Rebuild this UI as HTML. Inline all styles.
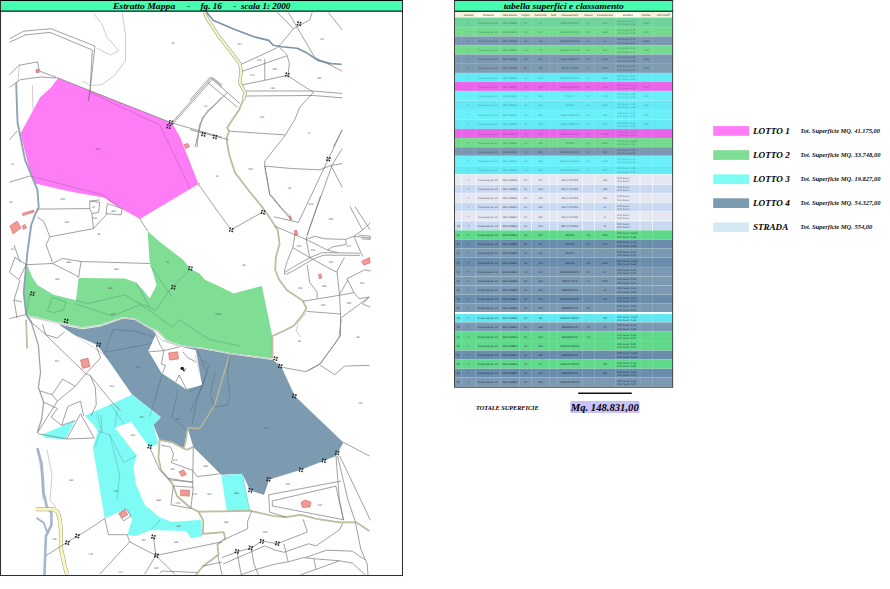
<!DOCTYPE html>
<html lang="it"><head><meta charset="utf-8"><title>Estratto Mappa fg. 16</title>
<style>
html,body{margin:0;padding:0;background:#fff;}
body{width:890px;height:589px;overflow:hidden;position:relative;font-family:"Liberation Serif",serif;}
svg{position:absolute;left:0;top:0;display:block;}
.bi{font-family:"Liberation Serif",serif;font-weight:bold;font-style:italic;}
.tt{font-family:"Liberation Sans",sans-serif;text-rendering:geometricPrecision;}
</style></head><body>
<svg width="890" height="589" viewBox="0 0 890 589">
<rect x="0" y="0" width="890" height="589" fill="#ffffff"/>

<g id="map">
<polygon points="58.0,78.0 172.0,123.0 180.0,137.0 198.5,184.0 139.8,219.0 110.7,202.5 104.4,197.8 70.0,191.5 35.2,183.6 30.0,172.0 20.5,133.5 40.0,97.5 51.0,87.5" fill="#fe7cf6" />
<polygon points="27.0,265.0 32.4,277.4 37.4,284.9 53.6,294.8 76.0,300.3 78.6,277.9 100.0,278.3 124.7,278.6 136.0,282.4 143.0,290.0 149.7,298.6 156.6,284.9 149.7,262.4 147.7,231.2 160.0,242.0 183.3,260.0 190.0,268.6 199.5,273.6 205.0,279.8 222.0,287.5 233.6,293.5 261.8,286.0 264.8,300.0 272.3,336.2 272.8,358.6 230.0,352.9 215.0,350.0 199.6,347.2 190.0,347.0 179.2,344.4 167.3,340.3 157.8,330.7 149.7,327.3 134.7,318.5 122.2,317.3 99.8,324.8 82.3,327.3 52.4,321.0 26.2,314.8 23.7,292.3" fill="#7fdd94" />
<polygon points="58.6,324.2 72.0,327.3 82.3,329.2 99.8,326.8 112.0,322.4 122.2,318.7 134.7,319.8 152.2,329.8 162.0,340.0 179.6,346.2 199.6,348.4 215.0,351.2 230.0,354.0 272.8,360.0 281.0,366.0 294.8,396.0 343.4,442.4 336.0,456.0 323.4,461.0 301.0,469.8 268.6,479.8 263.6,494.8 249.9,490.3 242.4,473.8 221.2,474.8 193.3,446.9 187.6,428.0 183.7,448.5 172.5,442.4 159.6,440.1 153.4,424.7 160.9,417.2 132.2,394.8 109.8,362.4 97.3,345.0 74.8,335.0" fill="#7c9ab0" />
<polygon points="156.0,333.7 148.4,351.0 161.5,373.0 186.0,389.3 202.3,384.9 195.8,350.0 179.6,346.5 162.0,340.5" fill="#ffffff" />
<polygon points="41.2,434.9 74.8,420.5 65.4,439.4 46.0,438.0" fill="#7ffbf6" />
<polygon points="84.8,415.5 132.2,394.8 160.9,417.5 153.4,425.0 158.4,443.6 149.7,447.4 131.0,422.0 114.7,427.4 136.7,455.4 133.4,467.3 136.0,484.8 144.7,504.8 159.6,517.2 172.0,522.0 200.8,519.7 202.5,536.0 191.6,538.4 185.8,531.0 151.0,530.0 136.0,536.0 127.2,534.7 132.2,519.7 126.0,508.5 104.8,518.5 92.8,447.4 97.8,431.2 93.5,425.0" fill="#7ffbf6" />
<polygon points="221.2,475.3 242.4,473.8 249.9,511.0 226.9,511.5" fill="#7ffbf6" />
<polyline points="27.0,316.0 52.4,321.8 66.0,324.8 82.3,328.2 99.8,325.8 112.0,321.4 122.2,317.9 134.7,319.1 149.7,328.2 157.8,331.8 167.3,341.2 179.2,345.4 199.6,348.0 215.0,350.7 230.0,353.5 272.8,359.4" fill="none" stroke="#cdd2cc" stroke-width="1.3" stroke-linejoin="round"/>
<polyline points="204.2,12.0 208.0,20.2 218.2,35.5 231.0,52.0 239.9,63.5 241.3,72.0 239.6,82.5 245.2,93.0 243.3,100.0" fill="none" stroke="#8f8f80" stroke-width="3.3" stroke-linejoin="round"/>
<polyline points="204.2,12.0 208.0,20.2 218.2,35.5 231.0,52.0 239.9,63.5 241.3,72.0 239.6,82.5 245.2,93.0 243.3,100.0" fill="none" stroke="#f8f6c6" stroke-width="2.3" stroke-linejoin="round"/>
<polyline points="243.3,100.0 238.8,110.3 227.1,127.8 229.1,131.0 226.5,138.8 229.1,154.3 234.9,172.4 251.0,193.5 262.0,206.7 269.5,217.4 277.7,230.0 279.6,243.8 275.8,257.6 275.2,270.0 279.3,280.0 287.0,290.2 302.3,300.4 306.5,308.0 303.1,314.0 293.8,325.8 283.6,330.9 272.5,336.0 272.5,358.0" fill="none" stroke="#b4b496" stroke-width="1.7" stroke-linejoin="round"/>
<polyline points="243.3,100.0 238.8,110.3 227.1,127.8 229.1,131.0 226.5,138.8 229.1,154.3 234.9,172.4 251.0,193.5 262.0,206.7 269.5,217.4 277.7,230.0 279.6,243.8 275.8,257.6 275.2,270.0 279.3,280.0 287.0,290.2 302.3,300.4 306.5,308.0 303.1,314.0 293.8,325.8 283.6,330.9 272.5,336.0 272.5,358.0" fill="none" stroke="#cfcfb2" stroke-width="0.5" stroke-linejoin="round"/>
<polyline points="229.8,353.7 214.8,404.8 199.8,428.5 187.6,428.0 186.0,441.2 183.7,448.5" fill="none" stroke="#b4b496" stroke-width="1.2999999999999998" stroke-linejoin="round"/>
<polyline points="229.8,353.7 214.8,404.8 199.8,428.5 187.6,428.0 186.0,441.2 183.7,448.5" fill="none" stroke="#cfcfb2" stroke-width="0.3" stroke-linejoin="round"/>
<polyline points="192.7,446.9 187.6,449.7 183.7,448.5 172.5,442.4 159.6,440.1 158.4,458.1 161.2,470.4 172.5,483.9 177.0,496.0 190.0,507.5" fill="none" stroke="#b4b496" stroke-width="1.7" stroke-linejoin="round"/>
<polyline points="192.7,446.9 187.6,449.7 183.7,448.5 172.5,442.4 159.6,440.1 158.4,458.1 161.2,470.4 172.5,483.9 177.0,496.0 190.0,507.5" fill="none" stroke="#cfcfb2" stroke-width="0.5" stroke-linejoin="round"/>
<polyline points="190.0,507.5 198.5,511.7 222.0,511.4 249.8,510.7 273.3,516.0 286.1,517.1 301.0,514.9 318.1,519.2 339.4,522.4 356.5,522.4 369.3,531.0" fill="none" stroke="#b4b496" stroke-width="1.7" stroke-linejoin="round"/>
<polyline points="190.0,507.5 198.5,511.7 222.0,511.4 249.8,510.7 273.3,516.0 286.1,517.1 301.0,514.9 318.1,519.2 339.4,522.4 356.5,522.4 369.3,531.0" fill="none" stroke="#cfcfb2" stroke-width="0.5" stroke-linejoin="round"/>
<polyline points="198.5,512.0 203.3,520.4 203.0,533.8 223.7,532.2 225.3,538.5 217.4,544.5 218.6,554.5 202.2,567.0 196.0,574.7" fill="none" stroke="#b4b496" stroke-width="1.7" stroke-linejoin="round"/>
<polyline points="198.5,512.0 203.3,520.4 203.0,533.8 223.7,532.2 225.3,538.5 217.4,544.5 218.6,554.5 202.2,567.0 196.0,574.7" fill="none" stroke="#cfcfb2" stroke-width="0.5" stroke-linejoin="round"/>
<polyline points="26.2,319.8 27.0,348.5" fill="none" stroke="#b4b496" stroke-width="1.7" stroke-linejoin="round"/>
<polyline points="26.2,319.8 27.0,348.5" fill="none" stroke="#cfcfb2" stroke-width="0.5" stroke-linejoin="round"/>
<polyline points="206.8,12.5 213.1,20.2 233.5,29.1 253.9,36.8 268.8,40.4 273.2,45.2 281.7,46.8 297.2,48.3 307.5,53.3 317.9,60.4 330.8,63.6 341.1,64.2" fill="none" stroke="#7b92a9" stroke-width="1.6" stroke-linejoin="round" stroke-linecap="round"/>
<polyline points="16.2,83.7 17.5,122.4 25.0,159.8 37.4,189.7 38.7,207.0 35.0,214.9 31.2,225.0 27.4,252.4 23.7,292.3 26.2,314.8 31.2,322.0" fill="none" stroke="#8fa3b5" stroke-width="1.9" stroke-linejoin="round" stroke-linecap="round"/>
<polyline points="37.6,449.0 41.5,463.0 43.0,481.0 43.5,492.0 46.8,506.8 51.4,512.9 51.4,525.1 46.0,535.8 45.3,551.0 44.5,574.0" fill="none" stroke="#a3b7cd" stroke-width="2.6" stroke-linejoin="round" stroke-linecap="round"/>
<polyline points="36.9,518.2 43.7,522.8 46.8,531.2" fill="none" stroke="#9db1c7" stroke-width="1.8" stroke-linejoin="round" stroke-linecap="round"/>
<polyline points="31.2,322.0 33.2,328.5 38.4,345.4 39.5,360.1 40.5,372.7 38.4,387.5 43.7,402.2 41.6,419.0 37.4,432.7" fill="none" stroke="#9aa6b6" stroke-width="1.3" stroke-linejoin="round" stroke-linecap="round"/>
<polyline points="36.1,509.2 54.0,509.2 58.0,512.5 59.8,520.0 60.9,530.0 60.9,548.0 64.7,566.0 67.0,574.2" fill="none" stroke="#9a9a80" stroke-width="4.0" stroke-linejoin="round"/>
<polyline points="36.1,509.2 54.0,509.2 58.0,512.5 59.8,520.0 60.9,530.0 60.9,548.0 64.7,566.0 67.0,574.2" fill="none" stroke="#fbf7c0" stroke-width="3.1" stroke-linejoin="round"/>
<polyline points="9.5,38.7 23.7,31.2 51.1,28.7 94.8,46.1 94.8,47.4 89.8,92.3 88.5,101.0" fill="none" stroke="#787878" stroke-width="0.7" />
<polyline points="9.5,42.4 25.0,35.0 50.0,32.4 92.3,50.0 90.0,92.0" fill="none" stroke="#787878" stroke-width="0.7" />
<polyline points="9.5,74.8 18.7,65.4 37.4,61.9 39.4,71.1 58.0,78.0 172.0,123.0 222.0,137.3" fill="none" stroke="#787878" stroke-width="0.7" />
<polyline points="9.5,87.3 20.0,79.8 40.0,77.0 56.0,78.0" fill="none" stroke="#787878" stroke-width="0.7" />
<polyline points="172.0,122.6 212.0,77.3 222.0,84.8" fill="none" stroke="#787878" stroke-width="0.7" />
<polyline points="173.0,123.6 213.0,78.6 222.0,86.8" fill="none" stroke="#787878" stroke-width="0.7" />
<polyline points="208.3,109.8 199.5,124.7 197.0,147.3" fill="none" stroke="#787878" stroke-width="0.7" />
<polyline points="222.0,97.4 212.0,107.4 208.3,109.8" fill="none" stroke="#787878" stroke-width="0.7" />
<polyline points="9.5,139.8 17.0,131.0" fill="none" stroke="#787878" stroke-width="0.7" />
<polyline points="9.5,182.2 30.0,176.0" fill="none" stroke="#787878" stroke-width="0.7" />
<polyline points="198.3,184.0 214.5,207.0 231.2,229.7 262.3,212.2" fill="none" stroke="#787878" stroke-width="0.7" />
<polyline points="200.0,183.6 198.3,184.0" fill="none" stroke="#787878" stroke-width="0.7" />
<polyline points="37.4,209.1 89.8,208.6 89.8,201.1 99.8,199.9" fill="none" stroke="#787878" stroke-width="0.7" />
<polyline points="89.8,201.1 99.8,202.4 98.5,212.4 91.8,213.6 89.8,208.6" fill="none" stroke="#787878" stroke-width="0.7" />
<polyline points="91.8,213.6 93.5,228.6 49.9,236.8" fill="none" stroke="#787878" stroke-width="0.7" />
<polyline points="107.3,203.6 122.2,208.6 121.0,214.9 106.0,213.6 107.3,203.6" fill="none" stroke="#787878" stroke-width="0.7" />
<polyline points="93.5,228.6 107.3,213.6" fill="none" stroke="#787878" stroke-width="0.7" />
<polyline points="37.4,217.3 43.7,221.1 49.9,236.8 46.1,244.8 52.4,262.2" fill="none" stroke="#787878" stroke-width="0.7" />
<polyline points="26.2,264.7 52.4,263.5 62.4,258.5 81.1,261.5 149.7,263.5" fill="none" stroke="#787878" stroke-width="0.7" />
<polyline points="81.1,261.5 78.6,277.2" fill="none" stroke="#787878" stroke-width="0.7" />
<polyline points="52.4,263.5 74.8,274.7 78.6,277.2" fill="none" stroke="#787878" stroke-width="0.7" />
<polyline points="9.5,272.2 18.7,279.7 26.2,264.7 15.0,257.3 9.5,272.2" fill="none" stroke="#787878" stroke-width="0.7" />
<polyline points="139.7,218.6 147.7,231.2" fill="none" stroke="#787878" stroke-width="0.7" />
<polyline points="9.5,318.5 25.0,314.8" fill="none" stroke="#787878" stroke-width="0.7" />
<polyline points="14.0,245.0 20.0,262.0" fill="none" stroke="#787878" stroke-width="0.7" />
<polyline points="20.0,280.0 14.0,300.0 22.0,302.0" fill="none" stroke="#787878" stroke-width="0.7" />
<polyline points="14.0,300.0 17.0,318.0" fill="none" stroke="#787878" stroke-width="0.7" />
<polyline points="104.8,518.5 86.0,531.0 67.3,542.2 46.1,555.5" fill="none" stroke="#787878" stroke-width="0.7" />
<polyline points="104.8,518.5 108.5,534.7 127.2,534.7 129.7,541.8 155.9,555.5 222.0,541.8" fill="none" stroke="#787878" stroke-width="0.7" />
<polyline points="149.7,447.4 159.6,469.8 169.6,479.8 193.3,482.3" fill="none" stroke="#787878" stroke-width="0.7" />
<polyline points="173.4,486.0 193.3,487.3 190.8,508.5 170.9,504.8 173.4,486.0" fill="none" stroke="#787878" stroke-width="0.7" />
<polyline points="118.5,513.5 126.0,508.5 131.0,516.0 123.5,521.0 118.5,513.5" fill="none" stroke="#787878" stroke-width="0.7" />
<polyline points="129.7,541.8 99.8,574.0" fill="none" stroke="#787878" stroke-width="0.7" />
<polyline points="155.9,555.5 144.7,574.0" fill="none" stroke="#787878" stroke-width="0.7" />
<polyline points="155.9,555.5 174.6,574.0" fill="none" stroke="#787878" stroke-width="0.7" />
<polyline points="153.4,536.8 155.9,555.5" fill="none" stroke="#787878" stroke-width="0.7" />
<polyline points="159.6,573.0 162.0,571.0 197.0,572.5" fill="none" stroke="#787878" stroke-width="0.7" />
<polyline points="277.3,12.5 293.5,28.7 281.7,42.9 276.5,48.1 241.6,64.2" fill="none" stroke="#787878" stroke-width="0.7" />
<polyline points="288.5,12.5 314.7,57.4 342.2,71.1" fill="none" stroke="#787878" stroke-width="0.7" />
<polyline points="312.2,12.5 309.7,20.0 293.5,28.7" fill="none" stroke="#787878" stroke-width="0.7" />
<polyline points="328.4,12.5 342.2,29.9" fill="none" stroke="#787878" stroke-width="0.7" />
<polyline points="242.3,71.3 286.8,55.8" fill="none" stroke="#787878" stroke-width="0.7" />
<polyline points="279.1,46.8 286.8,54.5 289.4,63.6 288.1,73.9" fill="none" stroke="#787878" stroke-width="0.7" />
<polyline points="264.8,58.8 264.8,80.3" fill="none" stroke="#787878" stroke-width="0.7" />
<polyline points="242.4,84.8 264.8,80.3 287.3,75.3 299.7,83.6 313.5,92.3" fill="none" stroke="#787878" stroke-width="0.7" />
<polyline points="246.1,91.0 313.5,91.0 342.2,93.5" fill="none" stroke="#787878" stroke-width="0.7" />
<polyline points="246.1,96.0 313.5,95.5 342.2,97.8" fill="none" stroke="#787878" stroke-width="0.7" />
<polyline points="313.5,92.3 299.7,107.3 294.8,119.7 284.8,135.9 264.8,161.1 264.8,166.1" fill="none" stroke="#787878" stroke-width="0.7" />
<polyline points="229.9,131.2 284.8,134.9" fill="none" stroke="#787878" stroke-width="0.7" />
<polyline points="333.4,147.0 342.2,129.7" fill="none" stroke="#787878" stroke-width="0.7" />
<polyline points="190.0,99.8 210.0,77.3 239.9,103.5" fill="none" stroke="#787878" stroke-width="0.7" />
<polyline points="207.5,82.3 237.4,107.3" fill="none" stroke="#787878" stroke-width="0.7" />
<polyline points="190.0,129.7 228.7,139.7" fill="none" stroke="#787878" stroke-width="0.7" />
<polyline points="227.4,92.3 202.5,117.2 195.0,147.0" fill="none" stroke="#787878" stroke-width="0.7" />
<polyline points="264.8,166.1 292.3,168.6 319.7,169.8 330.9,165.4 342.2,163.6" fill="none" stroke="#787878" stroke-width="0.7" />
<polyline points="264.8,166.1 269.8,194.8 282.3,209.8 291.0,219.7" fill="none" stroke="#787878" stroke-width="0.7" />
<polyline points="342.2,129.9 298.5,222.2" fill="none" stroke="#787878" stroke-width="0.7" />
<polyline points="342.2,148.6 332.2,164.9 307.2,234.7" fill="none" stroke="#787878" stroke-width="0.7" />
<polyline points="330.9,165.4 342.2,187.3" fill="none" stroke="#787878" stroke-width="0.7" />
<polyline points="307.2,264.9 309.7,282.3 317.2,292.3 317.2,298.5" fill="none" stroke="#787878" stroke-width="0.7" />
<polyline points="347.1,278.6 364.6,269.8 370.8,271.1" fill="none" stroke="#787878" stroke-width="0.7" />
<polyline points="319.7,364.8 334.7,374.8 344.6,366.1 369.6,365.3" fill="none" stroke="#787878" stroke-width="0.7" />
<polyline points="343.4,442.4 369.6,456.1" fill="none" stroke="#787878" stroke-width="0.7" />
<polyline points="268.6,494.8 340.9,481.1" fill="none" stroke="#787878" stroke-width="0.7" />
<polyline points="272.3,501.0 335.9,486.1 343.4,519.7 292.3,509.8 272.3,506.0 272.3,501.0" fill="none" stroke="#787878" stroke-width="0.7" />
<polyline points="263.6,494.8 268.6,479.8" fill="none" stroke="#787878" stroke-width="0.7" />
<polyline points="264.8,166.1 269.8,194.8 272.0,196.0 280.9,207.3 290.3,216.8 291.6,219.9" fill="none" stroke="#787878" stroke-width="0.7" />
<polyline points="274.0,216.8 298.5,222.4" fill="none" stroke="#787878" stroke-width="0.7" />
<polyline points="320.5,196.0 306.0,238.8 309.8,257.6" fill="none" stroke="#787878" stroke-width="0.7" />
<polyline points="274.6,226.2 306.0,239.4 327.4,250.1 337.5,252.6" fill="none" stroke="#787878" stroke-width="0.7" />
<polyline points="306.0,239.4 314.8,236.3 324.9,238.8 345.6,239.4 353.8,236.3 370.2,238.1" fill="none" stroke="#787878" stroke-width="0.7" />
<polyline points="345.6,239.4 346.3,244.4 332.4,246.9 327.4,250.1" fill="none" stroke="#787878" stroke-width="0.7" />
<polyline points="295.3,232.5 292.8,247.6 287.2,261.4 284.6,270.0 284.8,275.0" fill="none" stroke="#787878" stroke-width="0.7" />
<polyline points="292.8,247.6 309.8,257.6 321.1,263.9 332.4,270.0 337.2,272.3" fill="none" stroke="#787878" stroke-width="0.7" />
<polyline points="284.8,272.3 292.2,267.7 309.8,257.6 322.4,252.6 360.1,253.2" fill="none" stroke="#787878" stroke-width="0.7" />
<polyline points="286.0,274.5 294.7,270.0 312.3,259.5 323.6,255.1 360.1,255.4" fill="none" stroke="#787878" stroke-width="0.7" />
<polyline points="344.4,257.6 337.5,270.0 337.2,272.3" fill="none" stroke="#787878" stroke-width="0.7" />
<polyline points="353.8,236.3 362.6,256.4" fill="none" stroke="#787878" stroke-width="0.7" />
<polyline points="350.0,206.7 362.6,230.0 370.2,223.0" fill="none" stroke="#787878" stroke-width="0.7" />
<polyline points="355.0,206.7 370.2,230.0" fill="none" stroke="#787878" stroke-width="0.7" />
<polyline points="362.6,230.0 353.8,236.3" fill="none" stroke="#787878" stroke-width="0.7" />
<polyline points="358.5,235.0 370.2,236.3 370.2,239.4 361.5,238.8" fill="none" stroke="#787878" stroke-width="0.7" />
<polyline points="42.6,324.3 45.8,334.8 57.4,338.0 64.7,331.7" fill="none" stroke="#787878" stroke-width="0.7" />
<polyline points="31.0,322.0 45.8,334.8 85.8,373.8 90.0,375.3" fill="none" stroke="#787878" stroke-width="0.7" />
<polyline points="85.8,373.8 100.5,358.0 96.3,345.4" fill="none" stroke="#787878" stroke-width="0.7" />
<polyline points="90.0,375.3 112.1,402.2 120.5,410.6" fill="none" stroke="#787878" stroke-width="0.7" />
<polyline points="90.0,375.3 95.3,387.5 96.3,404.3 91.1,415.9" fill="none" stroke="#787878" stroke-width="0.7" />
<polyline points="39.5,390.6 52.1,394.8 62.6,379.1 75.3,386.4 57.4,401.2 52.1,394.8" fill="none" stroke="#787878" stroke-width="0.7" />
<polyline points="75.3,386.4 85.8,373.8" fill="none" stroke="#787878" stroke-width="0.7" />
<polyline points="43.7,402.2 57.4,408.5 51.1,417.0 61.6,425.4 67.9,406.4 80.5,401.2 83.7,415.9" fill="none" stroke="#787878" stroke-width="0.7" />
<polyline points="37.4,432.7 57.4,401.2" fill="none" stroke="#787878" stroke-width="0.7" />
<polyline points="61.6,425.4 75.3,420.5" fill="none" stroke="#787878" stroke-width="0.7" />
<polyline points="38.4,433.8 66.8,439.0 94.2,438.0 80.5,413.8 66.8,439.0" fill="none" stroke="#787878" stroke-width="0.7" />
<polyline points="193.3,446.9 192.7,481.7 192.7,487.3" fill="none" stroke="#787878" stroke-width="0.7" />
<polyline points="161.2,445.2 170.2,446.9 173.6,453.6 171.3,462.6 192.7,470.4" fill="none" stroke="#787878" stroke-width="0.7" />
<polyline points="168.0,478.3 192.7,482.2" fill="none" stroke="#787878" stroke-width="0.7" />
<polyline points="192.7,470.4 197.2,476.6 219.7,473.8" fill="none" stroke="#787878" stroke-width="0.7" />
<polyline points="303.1,301.2 339.6,295.3 354.0,292.7 359.1,298.7 369.3,297.0" fill="none" stroke="#787878" stroke-width="0.7" />
<polyline points="306.5,311.4 340.5,314.0" fill="none" stroke="#787878" stroke-width="0.7" />
<polyline points="337.2,272.3 337.9,280.0 339.6,295.3 340.5,314.0 340.5,336.0 319.2,364.9 305.7,371.7 282.7,367.4" fill="none" stroke="#787878" stroke-width="0.7" />
<polyline points="341.3,319.0 338.8,337.7 320.9,363.2 307.4,370.9" fill="none" stroke="#787878" stroke-width="0.7" />
<polyline points="340.5,318.2 369.3,297.0 362.5,303.8 370.2,307.2" fill="none" stroke="#787878" stroke-width="0.7" />
<polyline points="347.1,278.6 354.0,292.7" fill="none" stroke="#787878" stroke-width="0.7" />
<polyline points="348.0,280.0 339.8,294.0" fill="none" stroke="#787878" stroke-width="0.7" />
<polyline points="251.9,510.7 247.6,521.3 247.6,528.8 224.2,539.5" fill="none" stroke="#787878" stroke-width="0.7" />
<polyline points="222.0,557.6 237.0,551.9 251.3,548.0 261.9,541.0 277.1,543.8 307.4,532.0 303.1,519.2" fill="none" stroke="#787878" stroke-width="0.7" />
<polyline points="283.9,543.8 288.2,561.9 275.4,564.0 256.2,569.4 241.2,574.7" fill="none" stroke="#787878" stroke-width="0.7" />
<polyline points="283.9,552.3 308.5,543.8 316.0,545.9 339.4,529.9 342.6,523.5" fill="none" stroke="#787878" stroke-width="0.7" />
<polyline points="288.2,561.9 303.2,557.6 313.8,558.7 339.4,560.8 352.3,563.0 365.1,574.7" fill="none" stroke="#787878" stroke-width="0.7" />
<polyline points="305.3,557.6 326.6,550.2 352.3,551.2 365.1,559.8" fill="none" stroke="#787878" stroke-width="0.7" />
<polyline points="313.8,558.7 316.0,569.4 301.0,574.7" fill="none" stroke="#787878" stroke-width="0.7" />
<polyline points="316.0,569.4 339.4,560.8" fill="none" stroke="#787878" stroke-width="0.7" />
<polyline points="336.0,456.0 339.4,500.0 343.7,520.3" fill="none" stroke="#787878" stroke-width="0.7" />
<polyline points="337.5,456.0 348.0,500.0 355.5,522.4 360.8,549.1 367.2,564.0 368.0,575.0" fill="none" stroke="#787878" stroke-width="0.7" />
<polyline points="339.7,456.0 360.8,500.0 370.4,520.3" fill="none" stroke="#787878" stroke-width="0.7" />
<polyline points="237.0,551.9 241.2,574.7" fill="none" stroke="#787878" stroke-width="0.7" />
<polyline points="251.3,548.0 254.0,564.0 258.3,574.7" fill="none" stroke="#787878" stroke-width="0.7" />
<polyline points="217.8,555.5 222.0,574.7" fill="none" stroke="#787878" stroke-width="0.7" />
<polyline points="223.1,564.0 247.6,553.4 264.7,545.9 275.4,550.2 283.9,552.3" fill="none" stroke="#787878" stroke-width="0.7" />
<polyline points="202.8,566.2 222.0,562.0" fill="none" stroke="#787878" stroke-width="0.7" />
<polyline points="268.6,494.8 269.8,512.2 286.0,517.1" fill="none" stroke="#787878" stroke-width="0.7" />
<polyline points="148.9,351.8 163.8,350.6 179.2,347.0" fill="none" stroke="#787878" stroke-width="0.7" />
<polyline points="163.8,350.6 161.4,364.2 165.6,365.4 162.6,373.2" fill="none" stroke="#787878" stroke-width="0.7" />
<polyline points="182.8,351.8 187.6,357.7 195.9,361.9" fill="none" stroke="#787878" stroke-width="0.7" />
<polyline points="179.2,375.0 175.7,382.0" fill="none" stroke="#787878" stroke-width="0.7" />
<polyline points="179.2,375.0 186.4,389.2" fill="none" stroke="#787878" stroke-width="0.7" />
<polyline points="155.5,334.5 160.0,345.0 163.8,350.6" fill="none" stroke="#787878" stroke-width="0.7" />
<polyline points="32.4,84.8 33.0,109.8" fill="none" stroke="#9a9a9a" stroke-width="0.5" />
<polyline points="37.4,449.5 41.0,470.0 43.0,500.0" fill="none" stroke="#9a9a9a" stroke-width="0.5" />
<polyline points="47.0,449.5 52.0,475.0 50.0,500.0 56.0,507.0" fill="none" stroke="#9a9a9a" stroke-width="0.5" />
<polyline points="93.3,13.4 101.8,23.6 106.9,37.2 118.8,50.7 110.3,55.0 96.7,48.2" fill="none" stroke="#9a9a9a" stroke-width="0.5" />
<polyline points="122.2,12.5 125.5,35.5 125.5,60.9 113.7,76.2 101.8,84.7 89.9,85.6 83.1,81.3" fill="none" stroke="#9a9a9a" stroke-width="0.5" />
<polyline points="19.4,64.3 17.7,83.0" fill="none" stroke="#9a9a9a" stroke-width="0.5" />
<polyline points="306.5,313.1 298.0,322.4 296.3,330.9 300.6,336.9" fill="none" stroke="#9a9a9a" stroke-width="0.5" />
<polyline points="88.5,100.0 89.8,92.4 159.6,124.9 190.8,189.7" fill="none" stroke="#102030" stroke-width="0.6" opacity="0.3"/>
<polyline points="30.0,176.0 102.3,194.7 119.7,207.0" fill="none" stroke="#102030" stroke-width="0.6" opacity="0.3"/>
<polyline points="149.7,264.7 172.1,297.0" fill="none" stroke="#102030" stroke-width="0.6" opacity="0.3"/>
<polyline points="190.8,268.5 172.1,287.2 164.6,297.0 156.6,309.0" fill="none" stroke="#102030" stroke-width="0.6" opacity="0.3"/>
<polyline points="47.4,311.0 52.4,297.3 66.1,302.3 63.6,309.8 53.6,312.8 47.4,311.0" fill="none" stroke="#102030" stroke-width="0.6" opacity="0.3"/>
<polyline points="76.0,300.3 87.3,303.6 124.7,294.8 137.2,302.3 149.7,307.3" fill="none" stroke="#102030" stroke-width="0.6" opacity="0.3"/>
<polyline points="74.8,303.6 112.2,316.0 139.7,304.8 147.2,308.5 172.1,327.3 179.6,319.8 209.5,339.7 222.0,342.2 240.0,346.0" fill="none" stroke="#102030" stroke-width="0.6" opacity="0.3"/>
<polyline points="136.0,282.4 149.7,307.3 156.0,311.0" fill="none" stroke="#102030" stroke-width="0.6" opacity="0.3"/>
<polyline points="30.0,292.3 26.2,314.8" fill="none" stroke="#102030" stroke-width="0.6" opacity="0.3"/>
<polyline points="59.9,324.8 109.8,358.4" fill="none" stroke="#102030" stroke-width="0.6" opacity="0.3"/>
<polyline points="113.5,329.7 104.8,352.2 152.2,343.5" fill="none" stroke="#102030" stroke-width="0.6" opacity="0.3"/>
<polyline points="113.5,329.7 134.7,331.0 154.6,337.2" fill="none" stroke="#102030" stroke-width="0.6" opacity="0.3"/>
<polyline points="149.7,417.2 162.1,374.8" fill="none" stroke="#102030" stroke-width="0.6" opacity="0.3"/>
<polyline points="197.0,349.9 207.0,372.3 197.0,399.8 192.0,424.7" fill="none" stroke="#102030" stroke-width="0.6" opacity="0.3"/>
<polyline points="178.0,390.0 172.0,417.0 186.0,430.0" fill="none" stroke="#102030" stroke-width="0.6" opacity="0.3"/>
<polyline points="195.0,355.0 203.0,385.0 190.0,392.0" fill="none" stroke="#102030" stroke-width="0.6" opacity="0.3"/>
<polyline points="203.0,360.0 208.7,365.0 203.7,382.3 190.0,412.0" fill="none" stroke="#102030" stroke-width="0.6" opacity="0.3"/>
<polyline points="215.0,372.3 210.0,394.8 215.0,407.3 227.4,404.8 229.9,394.8 227.4,372.3 229.9,355.0" fill="none" stroke="#102030" stroke-width="0.6" opacity="0.3"/>
<polyline points="97.8,431.2 109.8,434.9 119.7,474.8 117.2,499.8" fill="none" stroke="#102030" stroke-width="0.6" opacity="0.3"/>
<polyline points="109.8,434.9 123.5,462.4 136.7,455.4" fill="none" stroke="#102030" stroke-width="0.6" opacity="0.3"/>
<polyline points="101.0,415.0 102.3,432.4" fill="none" stroke="#102030" stroke-width="0.6" opacity="0.3"/>
<polyline points="117.2,410.0 114.7,427.4" fill="none" stroke="#102030" stroke-width="0.6" opacity="0.3"/>
<polyline points="97.3,413.5 101.0,430.0 94.8,447.0" fill="none" stroke="#102030" stroke-width="0.6" opacity="0.3"/>
<polyline points="109.8,403.5 124.7,424.7" fill="none" stroke="#102030" stroke-width="0.6" opacity="0.3"/>
<polyline points="151.0,530.0 160.0,520.0" fill="none" stroke="#102030" stroke-width="0.6" opacity="0.3"/>
<polyline points="242.4,473.8 249.9,511.0" fill="none" stroke="#102030" stroke-width="0.6" opacity="0.3"/>
<polygon points="36.0,69.5 39.0,69.5 39.0,72.5 36.0,72.5" fill="#f29a94" stroke="#c0504d" stroke-width="0.5"/>
<polygon points="184.0,144.5 188.0,143.5 189.5,147.0 185.5,148.5" fill="#f29a94" stroke="#c0504d" stroke-width="0.5"/>
<polygon points="22.4,213.4 33.7,210.0 34.2,212.0 23.0,215.6" fill="#f29a94" stroke="#c0504d" stroke-width="0.5"/>
<polygon points="10.0,226.0 17.0,221.0 21.0,228.0 13.0,234.0" fill="#f29a94" stroke="#c0504d" stroke-width="0.5"/>
<polygon points="22.0,226.0 25.0,224.5 26.5,228.0 23.5,229.5" fill="#f29a94" stroke="#c0504d" stroke-width="0.5"/>
<polygon points="119.7,513.5 125.0,510.0 127.8,514.5 122.5,518.0" fill="#f29a94" stroke="#c0504d" stroke-width="0.5"/>
<polygon points="180.8,489.8 189.6,490.5 189.2,496.3 180.4,495.6" fill="#f29a94" stroke="#c0504d" stroke-width="0.5"/>
<polygon points="301.0,502.5 305.0,500.0 311.0,502.0 310.0,507.0 302.5,507.5" fill="#f29a94" stroke="#c0504d" stroke-width="0.5"/>
<polygon points="361.4,261.4 369.5,257.6 370.2,262.7 363.9,265.2" fill="#f29a94" stroke="#c0504d" stroke-width="0.5"/>
<polygon points="318.5,274.5 321.0,274.0 321.8,278.0 319.3,278.6" fill="#f29a94" stroke="#c0504d" stroke-width="0.5"/>
<polygon points="294.3,230.6 296.8,230.2 297.8,234.8 295.3,235.2" fill="#f29a94" stroke="#c0504d" stroke-width="0.5"/>
<polygon points="289.0,216.4 290.5,216.0 291.6,219.6 290.2,220.0" fill="#f29a94" stroke="#c0504d" stroke-width="0.5"/>
<polygon points="80.5,360.1 87.9,358.0 90.0,366.4 82.6,368.5" fill="#f29a94" stroke="#c0504d" stroke-width="0.5"/>
<polygon points="179.0,471.8 183.7,469.9 186.5,474.4 181.8,476.3" fill="#f29a94" stroke="#c0504d" stroke-width="0.5"/>
<polygon points="168.5,352.9 177.5,351.8 178.6,358.9 169.7,360.1" fill="#f29a94" stroke="#c0504d" stroke-width="0.5"/>
<g transform="translate(170.9,122.4) rotate(12)" fill="#222"><circle cx="-1.3" cy="-1.3" r="0.9"/><circle cx="1.3" cy="-1.3" r="0.9"/><circle cx="-1.3" cy="1.3" r="0.9"/><circle cx="1.3" cy="1.3" r="0.9"/><circle r="0.5" fill="#777"/></g>
<g transform="translate(168.6,126.6) rotate(12)" fill="#222"><circle cx="-1.3" cy="-1.3" r="0.9"/><circle cx="1.3" cy="-1.3" r="0.9"/><circle cx="-1.3" cy="1.3" r="0.9"/><circle cx="1.3" cy="1.3" r="0.9"/><circle r="0.5" fill="#777"/></g>
<g transform="translate(203.5,134.4) rotate(12)" fill="#222"><circle cx="-1.3" cy="-1.3" r="0.9"/><circle cx="1.3" cy="-1.3" r="0.9"/><circle cx="-1.3" cy="1.3" r="0.9"/><circle cx="1.3" cy="1.3" r="0.9"/><circle r="0.5" fill="#777"/></g>
<g transform="translate(215.0,136.9) rotate(12)" fill="#222"><circle cx="-1.3" cy="-1.3" r="0.9"/><circle cx="1.3" cy="-1.3" r="0.9"/><circle cx="-1.3" cy="1.3" r="0.9"/><circle cx="1.3" cy="1.3" r="0.9"/><circle r="0.5" fill="#777"/></g>
<g transform="translate(299.0,23.7) rotate(12)" fill="#222"><circle cx="-1.3" cy="-1.3" r="0.9"/><circle cx="1.3" cy="-1.3" r="0.9"/><circle cx="-1.3" cy="1.3" r="0.9"/><circle cx="1.3" cy="1.3" r="0.9"/><circle r="0.5" fill="#777"/></g>
<g transform="translate(287.3,74.8) rotate(12)" fill="#222"><circle cx="-1.3" cy="-1.3" r="0.9"/><circle cx="1.3" cy="-1.3" r="0.9"/><circle cx="-1.3" cy="1.3" r="0.9"/><circle cx="1.3" cy="1.3" r="0.9"/><circle r="0.5" fill="#777"/></g>
<g transform="translate(328.4,159.1) rotate(12)" fill="#222"><circle cx="-1.3" cy="-1.3" r="0.9"/><circle cx="1.3" cy="-1.3" r="0.9"/><circle cx="-1.3" cy="1.3" r="0.9"/><circle cx="1.3" cy="1.3" r="0.9"/><circle r="0.5" fill="#777"/></g>
<g transform="translate(263.0,212.2) rotate(12)" fill="#222"><circle cx="-1.3" cy="-1.3" r="0.9"/><circle cx="1.3" cy="-1.3" r="0.9"/><circle cx="-1.3" cy="1.3" r="0.9"/><circle cx="1.3" cy="1.3" r="0.9"/><circle r="0.5" fill="#777"/></g>
<g transform="translate(231.2,229.9) rotate(12)" fill="#222"><circle cx="-1.3" cy="-1.3" r="0.9"/><circle cx="1.3" cy="-1.3" r="0.9"/><circle cx="-1.3" cy="1.3" r="0.9"/><circle cx="1.3" cy="1.3" r="0.9"/><circle r="0.5" fill="#777"/></g>
<g transform="translate(190.4,268.3) rotate(12)" fill="#222"><circle cx="-1.3" cy="-1.3" r="0.9"/><circle cx="1.3" cy="-1.3" r="0.9"/><circle cx="-1.3" cy="1.3" r="0.9"/><circle cx="1.3" cy="1.3" r="0.9"/><circle r="0.5" fill="#777"/></g>
<g transform="translate(173.4,287.3) rotate(12)" fill="#222"><circle cx="-1.3" cy="-1.3" r="0.9"/><circle cx="1.3" cy="-1.3" r="0.9"/><circle cx="-1.3" cy="1.3" r="0.9"/><circle cx="1.3" cy="1.3" r="0.9"/><circle r="0.5" fill="#777"/></g>
<g transform="translate(32.4,293.6) rotate(12)" fill="#222"><circle cx="-1.3" cy="-1.3" r="0.9"/><circle cx="1.3" cy="-1.3" r="0.9"/><circle cx="-1.3" cy="1.3" r="0.9"/><circle cx="1.3" cy="1.3" r="0.9"/><circle r="0.5" fill="#777"/></g>
<g transform="translate(66.1,321.0) rotate(12)" fill="#222"><circle cx="-1.3" cy="-1.3" r="0.9"/><circle cx="1.3" cy="-1.3" r="0.9"/><circle cx="-1.3" cy="1.3" r="0.9"/><circle cx="1.3" cy="1.3" r="0.9"/><circle r="0.5" fill="#777"/></g>
<g transform="translate(98.5,344.7) rotate(12)" fill="#222"><circle cx="-1.3" cy="-1.3" r="0.9"/><circle cx="1.3" cy="-1.3" r="0.9"/><circle cx="-1.3" cy="1.3" r="0.9"/><circle cx="1.3" cy="1.3" r="0.9"/><circle r="0.5" fill="#777"/></g>
<g transform="translate(275.5,358.6) rotate(12)" fill="#222"><circle cx="-1.3" cy="-1.3" r="0.9"/><circle cx="1.3" cy="-1.3" r="0.9"/><circle cx="-1.3" cy="1.3" r="0.9"/><circle cx="1.3" cy="1.3" r="0.9"/><circle r="0.5" fill="#777"/></g>
<g transform="translate(280.3,366.1) rotate(12)" fill="#222"><circle cx="-1.3" cy="-1.3" r="0.9"/><circle cx="1.3" cy="-1.3" r="0.9"/><circle cx="-1.3" cy="1.3" r="0.9"/><circle cx="1.3" cy="1.3" r="0.9"/><circle r="0.5" fill="#777"/></g>
<g transform="translate(294.3,396.0) rotate(12)" fill="#222"><circle cx="-1.3" cy="-1.3" r="0.9"/><circle cx="1.3" cy="-1.3" r="0.9"/><circle cx="-1.3" cy="1.3" r="0.9"/><circle cx="1.3" cy="1.3" r="0.9"/><circle r="0.5" fill="#777"/></g>
<g transform="translate(337.2,452.9) rotate(12)" fill="#222"><circle cx="-1.3" cy="-1.3" r="0.9"/><circle cx="1.3" cy="-1.3" r="0.9"/><circle cx="-1.3" cy="1.3" r="0.9"/><circle cx="1.3" cy="1.3" r="0.9"/><circle r="0.5" fill="#777"/></g>
<g transform="translate(323.9,460.6) rotate(12)" fill="#222"><circle cx="-1.3" cy="-1.3" r="0.9"/><circle cx="1.3" cy="-1.3" r="0.9"/><circle cx="-1.3" cy="1.3" r="0.9"/><circle cx="1.3" cy="1.3" r="0.9"/><circle r="0.5" fill="#777"/></g>
<g transform="translate(301.0,469.8) rotate(12)" fill="#222"><circle cx="-1.3" cy="-1.3" r="0.9"/><circle cx="1.3" cy="-1.3" r="0.9"/><circle cx="-1.3" cy="1.3" r="0.9"/><circle cx="1.3" cy="1.3" r="0.9"/><circle r="0.5" fill="#777"/></g>
<g transform="translate(268.6,479.3) rotate(12)" fill="#222"><circle cx="-1.3" cy="-1.3" r="0.9"/><circle cx="1.3" cy="-1.3" r="0.9"/><circle cx="-1.3" cy="1.3" r="0.9"/><circle cx="1.3" cy="1.3" r="0.9"/><circle r="0.5" fill="#777"/></g>
<g transform="translate(250.4,490.3) rotate(12)" fill="#222"><circle cx="-1.3" cy="-1.3" r="0.9"/><circle cx="1.3" cy="-1.3" r="0.9"/><circle cx="-1.3" cy="1.3" r="0.9"/><circle cx="1.3" cy="1.3" r="0.9"/><circle r="0.5" fill="#777"/></g>
<g transform="translate(149.7,446.6) rotate(12)" fill="#222"><circle cx="-1.3" cy="-1.3" r="0.9"/><circle cx="1.3" cy="-1.3" r="0.9"/><circle cx="-1.3" cy="1.3" r="0.9"/><circle cx="1.3" cy="1.3" r="0.9"/><circle r="0.5" fill="#777"/></g>
<g transform="translate(153.4,536.8) rotate(12)" fill="#222"><circle cx="-1.3" cy="-1.3" r="0.9"/><circle cx="1.3" cy="-1.3" r="0.9"/><circle cx="-1.3" cy="1.3" r="0.9"/><circle cx="1.3" cy="1.3" r="0.9"/><circle r="0.5" fill="#777"/></g>
<g transform="translate(156.4,555.5) rotate(12)" fill="#222"><circle cx="-1.3" cy="-1.3" r="0.9"/><circle cx="1.3" cy="-1.3" r="0.9"/><circle cx="-1.3" cy="1.3" r="0.9"/><circle cx="1.3" cy="1.3" r="0.9"/><circle r="0.5" fill="#777"/></g>
<g transform="translate(77.3,536.0) rotate(12)" fill="#222"><circle cx="-1.3" cy="-1.3" r="0.9"/><circle cx="1.3" cy="-1.3" r="0.9"/><circle cx="-1.3" cy="1.3" r="0.9"/><circle cx="1.3" cy="1.3" r="0.9"/><circle r="0.5" fill="#777"/></g>
<g transform="translate(67.3,542.7) rotate(12)" fill="#222"><circle cx="-1.3" cy="-1.3" r="0.9"/><circle cx="1.3" cy="-1.3" r="0.9"/><circle cx="-1.3" cy="1.3" r="0.9"/><circle cx="1.3" cy="1.3" r="0.9"/><circle r="0.5" fill="#777"/></g>
<g transform="translate(236.9,551.3) rotate(12)" fill="#222"><circle cx="-1.3" cy="-1.3" r="0.9"/><circle cx="1.3" cy="-1.3" r="0.9"/><circle cx="-1.3" cy="1.3" r="0.9"/><circle cx="1.3" cy="1.3" r="0.9"/><circle r="0.5" fill="#777"/></g>
<g transform="translate(250.6,548.0) rotate(12)" fill="#222"><circle cx="-1.3" cy="-1.3" r="0.9"/><circle cx="1.3" cy="-1.3" r="0.9"/><circle cx="-1.3" cy="1.3" r="0.9"/><circle cx="1.3" cy="1.3" r="0.9"/><circle r="0.5" fill="#777"/></g>
<g transform="translate(261.8,541.3) rotate(12)" fill="#222"><circle cx="-1.3" cy="-1.3" r="0.9"/><circle cx="1.3" cy="-1.3" r="0.9"/><circle cx="-1.3" cy="1.3" r="0.9"/><circle cx="1.3" cy="1.3" r="0.9"/><circle r="0.5" fill="#777"/></g>
<g transform="translate(277.3,543.5) rotate(12)" fill="#222"><circle cx="-1.3" cy="-1.3" r="0.9"/><circle cx="1.3" cy="-1.3" r="0.9"/><circle cx="-1.3" cy="1.3" r="0.9"/><circle cx="1.3" cy="1.3" r="0.9"/><circle r="0.5" fill="#777"/></g>
<g transform="translate(182.2,368.4)" fill="#111"><circle r="1.7"/><path d="M0,0L3.2,2.6L1.2,3.1Z"/></g>
<text x="173.0" y="43.5" class="tt" font-size="2.7" font-weight="bold" fill="#666" opacity="0.8" text-anchor="middle">20</text>
<text x="239.6" y="44.5" class="tt" font-size="2.7" font-weight="bold" fill="#666" opacity="0.8" text-anchor="middle">137</text>
<text x="322.3" y="39.9" class="tt" font-size="2.7" font-weight="bold" fill="#666" opacity="0.8" text-anchor="middle">167</text>
<text x="259.0" y="60.9" class="tt" font-size="2.7" font-weight="bold" fill="#666" opacity="0.8" text-anchor="middle">178</text>
<text x="252.0" y="75.9" class="tt" font-size="2.7" font-weight="bold" fill="#666" opacity="0.8" text-anchor="middle">179</text>
<text x="274.7" y="69.6" class="tt" font-size="2.7" font-weight="bold" fill="#666" opacity="0.8" text-anchor="middle">180</text>
<text x="273.0" y="88.6" class="tt" font-size="2.7" font-weight="bold" fill="#666" opacity="0.8" text-anchor="middle">181</text>
<text x="319.3" y="78.6" class="tt" font-size="2.7" font-weight="bold" fill="#666" opacity="0.8" text-anchor="middle">182</text>
<text x="262.0" y="117.7" class="tt" font-size="2.7" font-weight="bold" fill="#666" opacity="0.8" text-anchor="middle">312</text>
<text x="309.3" y="133.7" class="tt" font-size="2.7" font-weight="bold" fill="#666" opacity="0.8" text-anchor="middle">17</text>
<text x="205.5" y="107.2" class="tt" font-size="2.7" font-weight="bold" fill="#666" opacity="0.8" text-anchor="middle">14</text>
<text x="217.0" y="177.3" class="tt" font-size="2.7" font-weight="bold" fill="#666" opacity="0.8" text-anchor="middle">15</text>
<text x="250.6" y="169.9" class="tt" font-size="2.7" font-weight="bold" fill="#666" opacity="0.8" text-anchor="middle">252</text>
<text x="289.7" y="189.4" class="tt" font-size="2.7" font-weight="bold" fill="#666" opacity="0.8" text-anchor="middle">42</text>
<text x="310.8" y="205.4" class="tt" font-size="2.7" font-weight="bold" fill="#666" opacity="0.8" text-anchor="middle">314</text>
<text x="330.8" y="219.9" class="tt" font-size="2.7" font-weight="bold" fill="#666" opacity="0.8" text-anchor="middle">239</text>
<text x="97.7" y="149.8" class="tt" font-size="2.7" font-weight="bold" fill="#666" opacity="0.8" text-anchor="middle">460</text>
<text x="62.7" y="199.9" class="tt" font-size="2.7" font-weight="bold" fill="#666" opacity="0.8" text-anchor="middle">262</text>
<text x="66.7" y="222.9" class="tt" font-size="2.7" font-weight="bold" fill="#666" opacity="0.8" text-anchor="middle">263</text>
<text x="98.7" y="234.5" class="tt" font-size="2.7" font-weight="bold" fill="#666" opacity="0.8" text-anchor="middle">39</text>
<text x="68.7" y="262.9" class="tt" font-size="2.7" font-weight="bold" fill="#666" opacity="0.8" text-anchor="middle">444</text>
<text x="116.3" y="269.9" class="tt" font-size="2.7" font-weight="bold" fill="#666" opacity="0.8" text-anchor="middle">443</text>
<text x="57.6" y="279.9" class="tt" font-size="2.7" font-weight="bold" fill="#666" opacity="0.8" text-anchor="middle">402</text>
<text x="110.3" y="288.9" class="tt" font-size="2.7" font-weight="bold" fill="#666" opacity="0.8" text-anchor="middle">440</text>
<text x="168.0" y="262.9" class="tt" font-size="2.7" font-weight="bold" fill="#666" opacity="0.8" text-anchor="middle">41</text>
<text x="244.0" y="265.5" class="tt" font-size="2.7" font-weight="bold" fill="#666" opacity="0.8" text-anchor="middle">40</text>
<text x="12.5" y="165.3" class="tt" font-size="2.7" font-weight="bold" fill="#666" opacity="0.8" text-anchor="middle">51</text>
<text x="11.0" y="202.9" class="tt" font-size="2.7" font-weight="bold" fill="#666" opacity="0.8" text-anchor="middle">42</text>
<text x="12.5" y="249.9" class="tt" font-size="2.7" font-weight="bold" fill="#666" opacity="0.8" text-anchor="middle">36</text>
<text x="218.3" y="314.8" class="tt" font-size="2.7" font-weight="bold" fill="#666" opacity="0.8" text-anchor="middle">1009</text>
<text x="113.0" y="314.9" class="tt" font-size="2.7" font-weight="bold" fill="#666" opacity="0.8" text-anchor="middle">442</text>
<text x="299.5" y="341.7" class="tt" font-size="2.7" font-weight="bold" fill="#666" opacity="0.8" text-anchor="middle">86</text>
<text x="357.9" y="337.6" class="tt" font-size="2.7" font-weight="bold" fill="#666" opacity="0.8" text-anchor="middle">45</text>
<text x="360.4" y="403.6" class="tt" font-size="2.7" font-weight="bold" fill="#666" opacity="0.8" text-anchor="middle">131</text>
<text x="265.5" y="428.9" class="tt" font-size="2.7" font-weight="bold" fill="#666" opacity="0.8" text-anchor="middle">102</text>
<text x="138.0" y="367.9" class="tt" font-size="2.7" font-weight="bold" fill="#666" opacity="0.8" text-anchor="middle">457</text>
<text x="177.7" y="420.3" class="tt" font-size="2.7" font-weight="bold" fill="#666" opacity="0.8" text-anchor="middle">459</text>
<text x="111.7" y="387.3" class="tt" font-size="2.7" font-weight="bold" fill="#666" opacity="0.8" text-anchor="middle">151</text>
<text x="56.9" y="361.9" class="tt" font-size="2.7" font-weight="bold" fill="#666" opacity="0.8" text-anchor="middle">337</text>
<text x="71.0" y="480.9" class="tt" font-size="2.7" font-weight="bold" fill="#666" opacity="0.8" text-anchor="middle">145</text>
<text x="142.0" y="417.9" class="tt" font-size="2.7" font-weight="bold" fill="#666" opacity="0.8" text-anchor="middle">287</text>
<text x="133.0" y="435.6" class="tt" font-size="2.7" font-weight="bold" fill="#666" opacity="0.8" text-anchor="middle">401</text>
<text x="115.7" y="492.4" class="tt" font-size="2.7" font-weight="bold" fill="#666" opacity="0.8" text-anchor="middle">143</text>
<text x="158.4" y="500.5" class="tt" font-size="2.7" font-weight="bold" fill="#666" opacity="0.8" text-anchor="middle">449</text>
<text x="178.7" y="526.9" class="tt" font-size="2.7" font-weight="bold" fill="#666" opacity="0.8" text-anchor="middle">443</text>
<text x="205.6" y="466.9" class="tt" font-size="2.7" font-weight="bold" fill="#666" opacity="0.8" text-anchor="middle">404</text>
<text x="209.6" y="494.9" class="tt" font-size="2.7" font-weight="bold" fill="#666" opacity="0.8" text-anchor="middle">447</text>
<text x="236.5" y="493.9" class="tt" font-size="2.7" font-weight="bold" fill="#666" opacity="0.8" text-anchor="middle">446</text>
<text x="287.8" y="485.3" class="tt" font-size="2.7" font-weight="bold" fill="#666" opacity="0.8" text-anchor="middle">132</text>
<text x="319.8" y="505.6" class="tt" font-size="2.7" font-weight="bold" fill="#666" opacity="0.8" text-anchor="middle">130</text>
<text x="225.9" y="522.9" class="tt" font-size="2.7" font-weight="bold" fill="#666" opacity="0.8" text-anchor="middle">184</text>
<text x="265.0" y="532.9" class="tt" font-size="2.7" font-weight="bold" fill="#666" opacity="0.8" text-anchor="middle">185</text>
<text x="176.0" y="542.9" class="tt" font-size="2.7" font-weight="bold" fill="#666" opacity="0.8" text-anchor="middle">186</text>
<text x="143.7" y="540.6" class="tt" font-size="2.7" font-weight="bold" fill="#666" opacity="0.8" text-anchor="middle">187</text>
<text x="90.4" y="554.9" class="tt" font-size="2.7" font-weight="bold" fill="#666" opacity="0.8" text-anchor="middle">178</text>
<text x="54.3" y="539.6" class="tt" font-size="2.7" font-weight="bold" fill="#666" opacity="0.8" text-anchor="middle">128</text>
<text x="120.3" y="572.9" class="tt" font-size="2.7" font-weight="bold" fill="#666" opacity="0.8" text-anchor="middle">173</text>
<text x="156.3" y="568.6" class="tt" font-size="2.7" font-weight="bold" fill="#666" opacity="0.8" text-anchor="middle">182</text>
<text x="175.0" y="460.9" class="tt" font-size="2.7" font-weight="bold" fill="#666" opacity="0.8" text-anchor="middle">273</text>
<text x="172.6" y="469.9" class="tt" font-size="2.7" font-weight="bold" fill="#666" opacity="0.8" text-anchor="middle">281</text>
<text x="177.7" y="503.9" class="tt" font-size="2.7" font-weight="bold" fill="#666" opacity="0.8" text-anchor="middle">279</text>
<text x="194.4" y="494.9" class="tt" font-size="2.7" font-weight="bold" fill="#666" opacity="0.8" text-anchor="middle">270</text>
<text x="93.6" y="207.9" class="tt" font-size="2.7" font-weight="bold" fill="#666" opacity="0.8" text-anchor="middle">52</text>
<text x="113.5" y="211.9" class="tt" font-size="2.7" font-weight="bold" fill="#666" opacity="0.8" text-anchor="middle">450</text>
<text x="94.5" y="218.9" class="tt" font-size="2.7" font-weight="bold" fill="#666" opacity="0.8" text-anchor="middle">264</text>
<text x="184.0" y="369.9" class="tt" font-size="2.7" font-weight="bold" fill="#666" opacity="0.8" text-anchor="middle">133</text>
<text x="300.0" y="288.9" class="tt" font-size="2.7" font-weight="bold" fill="#666" opacity="0.8" text-anchor="middle">128</text>
<text x="324.0" y="286.9" class="tt" font-size="2.7" font-weight="bold" fill="#666" opacity="0.8" text-anchor="middle">298</text>
<text x="323.0" y="305.9" class="tt" font-size="2.7" font-weight="bold" fill="#666" opacity="0.8" text-anchor="middle">329</text>
<text x="349.0" y="303.9" class="tt" font-size="2.7" font-weight="bold" fill="#666" opacity="0.8" text-anchor="middle">330</text>
<text x="299.0" y="246.9" class="tt" font-size="2.7" font-weight="bold" fill="#666" opacity="0.8" text-anchor="middle">125</text>
<text x="313.0" y="250.9" class="tt" font-size="2.7" font-weight="bold" fill="#666" opacity="0.8" text-anchor="middle">124</text>
<text x="349.0" y="246.9" class="tt" font-size="2.7" font-weight="bold" fill="#666" opacity="0.8" text-anchor="middle">217</text>
<text x="331.0" y="262.9" class="tt" font-size="2.7" font-weight="bold" fill="#666" opacity="0.8" text-anchor="middle">232</text>
<text x="362.0" y="283.9" class="tt" font-size="2.7" font-weight="bold" fill="#666" opacity="0.8" text-anchor="middle">313</text>
</g>
<rect x="0.5" y="0.5" width="402" height="575" fill="none" stroke="#303030" stroke-width="1.05"/>
<rect x="1" y="1" width="401" height="10" fill="#45fcb1"/>
<rect x="0" y="10.6" width="403" height="1.1" fill="#000"/>
<rect x="0" y="0" width="403" height="1" fill="#000"/>
<text x="112.9" y="8.6" class="bi" font-size="7.9" fill="#000" textLength="62.4" lengthAdjust="spacingAndGlyphs">Estratto Mappa</text>
<text x="187.0" y="8.6" class="bi" font-size="7.9" fill="#000" textLength="3.4" lengthAdjust="spacingAndGlyphs">-</text>
<text x="200.5" y="8.6" class="bi" font-size="7.9" fill="#000" textLength="21.4" lengthAdjust="spacingAndGlyphs">fg. 16</text>
<text x="233.0" y="8.6" class="bi" font-size="7.9" fill="#000" textLength="3.4" lengthAdjust="spacingAndGlyphs">-</text>
<text x="241.0" y="8.6" class="bi" font-size="7.9" fill="#000" textLength="49.4" lengthAdjust="spacingAndGlyphs">scala 1: 2000</text>
<g id="table">
<rect x="454.6" y="0.6" width="218.0" height="10.4" fill="#45fcb1"/>
<text x="503.7" y="8.7" class="bi" font-size="8.5" fill="#000" textLength="120" lengthAdjust="spacingAndGlyphs">tabella superfici e classamento</text>
<rect x="454.6" y="11.8" width="218.0" height="5.9" fill="#f4f1dc"/>
<circle cx="669" cy="14.6" r="1.1" fill="#8fb0c8"/>
<rect x="476.2" y="12" width="23.9" height="5.5" fill="#fffef4" opacity="0.8"/>
<rect x="615.8" y="12" width="23.8" height="5.5" fill="#fffef4" opacity="0.8"/>
<text x="468.6" y="15.6" class="tt" font-size="2.7" font-weight="bold" fill="#7d6a35" text-anchor="middle">Catasto</text>
<text x="488.1" y="15.6" class="tt" font-size="2.7" font-weight="bold" fill="#7d6a35" text-anchor="middle">Titolarità</text>
<text x="510.0" y="15.6" class="tt" font-size="2.7" font-weight="bold" fill="#7d6a35" text-anchor="middle">Ubicazione</text>
<text x="525.5" y="15.6" class="tt" font-size="2.7" font-weight="bold" fill="#7d6a35" text-anchor="middle">Foglio</text>
<text x="540.5" y="15.6" class="tt" font-size="2.7" font-weight="bold" fill="#7d6a35" text-anchor="middle">Particella</text>
<text x="553.5" y="15.6" class="tt" font-size="2.7" font-weight="bold" fill="#7d6a35" text-anchor="middle">Sub</text>
<text x="569.8" y="15.6" class="tt" font-size="2.7" font-weight="bold" fill="#7d6a35" text-anchor="middle">Classamento</text>
<text x="588.5" y="15.6" class="tt" font-size="2.7" font-weight="bold" fill="#7d6a35" text-anchor="middle">Classe</text>
<text x="605.0" y="15.6" class="tt" font-size="2.7" font-weight="bold" fill="#7d6a35" text-anchor="middle">Consistenza</text>
<text x="627.7" y="15.6" class="tt" font-size="2.7" font-weight="bold" fill="#7d6a35" text-anchor="middle">Rendita</text>
<text x="646.2" y="15.6" class="tt" font-size="2.7" font-weight="bold" fill="#7d6a35" text-anchor="middle">Partita</text>
<text x="662.5" y="15.6" class="tt" font-size="2.7" font-weight="bold" fill="#7d6a35" text-anchor="middle">Altri Dati</text>
<rect x="454.6" y="17.60" width="218.0" height="9.55" fill="#6fd39c"/>
<rect x="454.6" y="27.10" width="218.0" height="9.35" fill="#73da8e"/>
<rect x="454.6" y="36.40" width="218.0" height="9.15" fill="#7b97b1"/>
<rect x="454.6" y="45.50" width="218.0" height="9.05" fill="#73da8e"/>
<rect x="454.6" y="54.50" width="218.0" height="8.65" fill="#7b97b1"/>
<rect x="454.6" y="63.10" width="218.0" height="9.85" fill="#7e9bb2"/>
<rect x="454.6" y="72.90" width="218.0" height="9.15" fill="#63eaf5"/>
<rect x="454.6" y="82.00" width="218.0" height="8.95" fill="#ea64ea"/>
<rect x="454.6" y="90.90" width="218.0" height="9.55" fill="#6af0f8"/>
<rect x="454.6" y="100.40" width="218.0" height="9.55" fill="#63eaf5"/>
<rect x="454.6" y="109.90" width="218.0" height="9.55" fill="#6af0f8"/>
<rect x="454.6" y="119.40" width="218.0" height="9.55" fill="#63eaf5"/>
<rect x="454.6" y="128.90" width="218.0" height="9.25" fill="#ea64ea"/>
<rect x="454.6" y="138.10" width="218.0" height="9.15" fill="#73da8e"/>
<rect x="454.6" y="147.20" width="218.0" height="8.65" fill="#7b97b1"/>
<rect x="454.6" y="155.80" width="218.0" height="9.75" fill="#6af0f8"/>
<rect x="454.6" y="165.50" width="218.0" height="9.05" fill="#63eaf5"/>
<rect x="454.6" y="174.50" width="218.0" height="9.85" fill="#e5e8f3"/>
<rect x="454.6" y="184.30" width="218.0" height="8.85" fill="#c9d9f2"/>
<rect x="454.6" y="193.10" width="218.0" height="9.45" fill="#e5e8f3"/>
<rect x="454.6" y="202.50" width="218.0" height="9.25" fill="#c9d9f2"/>
<rect x="454.6" y="211.70" width="218.0" height="9.35" fill="#e5e8f3"/>
<rect x="454.6" y="221.00" width="218.0" height="9.35" fill="#c9d9f2"/>
<rect x="454.6" y="230.30" width="218.0" height="9.25" fill="#5fd98a"/>
<rect x="454.6" y="239.50" width="218.0" height="9.15" fill="#6b8dad"/>
<rect x="454.6" y="248.60" width="218.0" height="9.15" fill="#7b99b2"/>
<rect x="454.6" y="257.70" width="218.0" height="9.35" fill="#6b8dad"/>
<rect x="454.6" y="267.00" width="218.0" height="9.35" fill="#7b99b2"/>
<rect x="454.6" y="276.30" width="218.0" height="9.25" fill="#7b99b2"/>
<rect x="454.6" y="285.50" width="218.0" height="9.15" fill="#7b99b2"/>
<rect x="454.6" y="294.60" width="218.0" height="9.15" fill="#6b8dad"/>
<rect x="454.6" y="303.70" width="218.0" height="8.55" fill="#7b99b2"/>
<rect x="454.6" y="313.90" width="218.0" height="8.55" fill="#5fe8f2"/>
<rect x="454.6" y="322.40" width="218.0" height="9.25" fill="#7b99b2"/>
<rect x="454.6" y="331.60" width="218.0" height="9.45" fill="#5fd98a"/>
<rect x="454.6" y="341.00" width="218.0" height="9.55" fill="#5fd98a"/>
<rect x="454.6" y="350.50" width="218.0" height="9.15" fill="#6b8dad"/>
<rect x="454.6" y="359.60" width="218.0" height="9.15" fill="#5fd98a"/>
<rect x="454.6" y="368.70" width="218.0" height="8.95" fill="#6b8dad"/>
<rect x="454.6" y="377.60" width="218.0" height="9.25" fill="#7b99b2"/>
<rect x="461.15" y="17.60" width="0.7" height="9.50" fill="#ffffff" opacity="0.12"/>
<rect x="475.45" y="17.60" width="0.7" height="9.50" fill="#ffffff" opacity="0.12"/>
<rect x="500.15" y="17.60" width="0.7" height="9.50" fill="#ffffff" opacity="0.12"/>
<rect x="519.15" y="17.60" width="0.7" height="9.50" fill="#ffffff" opacity="0.12"/>
<rect x="531.05" y="17.60" width="0.7" height="9.50" fill="#ffffff" opacity="0.12"/>
<rect x="549.35" y="17.60" width="0.7" height="9.50" fill="#ffffff" opacity="0.12"/>
<rect x="556.85" y="17.60" width="0.7" height="9.50" fill="#ffffff" opacity="0.12"/>
<rect x="582.05" y="17.60" width="0.7" height="9.50" fill="#ffffff" opacity="0.12"/>
<rect x="594.25" y="17.60" width="0.7" height="9.50" fill="#ffffff" opacity="0.12"/>
<rect x="615.05" y="17.60" width="0.7" height="9.50" fill="#ffffff" opacity="0.12"/>
<rect x="639.65" y="17.60" width="0.7" height="9.50" fill="#ffffff" opacity="0.12"/>
<rect x="652.15" y="17.60" width="0.7" height="9.50" fill="#ffffff" opacity="0.12"/>
<rect x="454.6" y="17.30" width="218.0" height="0.6" fill="#ffffff" opacity="0.12"/>
<text x="468.6" y="23.55" class="tt" font-size="2.5" font-weight="bold" fill="rgba(10,50,30,0.42)" text-anchor="middle">T</text>
<text x="488.1" y="23.55" class="tt" font-size="2.5" font-weight="bold" fill="rgba(10,50,30,0.42)" text-anchor="middle">Proprietà per 1/1</text>
<text x="510.0" y="23.55" class="tt" font-size="2.5" font-weight="bold" fill="rgba(10,50,30,0.42)" text-anchor="middle">SOLUOMBU</text>
<text x="525.5" y="23.55" class="tt" font-size="2.5" font-weight="bold" fill="rgba(10,50,30,0.42)" text-anchor="middle">16</text>
<text x="540.5" y="23.55" class="tt" font-size="2.5" font-weight="bold" fill="rgba(10,50,30,0.42)" text-anchor="middle">40</text>
<text x="569.8" y="23.55" class="tt" font-size="2.5" font-weight="bold" fill="rgba(10,50,30,0.42)" text-anchor="middle">BOSCO MISTO</text>
<text x="588.5" y="23.55" class="tt" font-size="2.5" font-weight="bold" fill="rgba(10,50,30,0.42)" text-anchor="middle">01</text>
<text x="605.0" y="23.55" class="tt" font-size="2.5" font-weight="bold" fill="rgba(10,50,30,0.42)" text-anchor="middle">2330</text>
<text x="617.4" y="21.75" class="tt" font-size="2.5" font-weight="bold" fill="rgba(10,50,30,0.42)">R.D. Euro: 0,72</text>
<text x="617.4" y="25.05" class="tt" font-size="2.5" font-weight="bold" fill="rgba(10,50,30,0.42)">R.A. Euro: 0,08</text>
<text x="646.2" y="23.55" class="tt" font-size="2.5" font-weight="bold" fill="rgba(10,50,30,0.42)" text-anchor="middle">2932</text>
<rect x="461.15" y="27.10" width="0.7" height="9.30" fill="#ffffff" opacity="0.12"/>
<rect x="475.45" y="27.10" width="0.7" height="9.30" fill="#ffffff" opacity="0.12"/>
<rect x="500.15" y="27.10" width="0.7" height="9.30" fill="#ffffff" opacity="0.12"/>
<rect x="519.15" y="27.10" width="0.7" height="9.30" fill="#ffffff" opacity="0.12"/>
<rect x="531.05" y="27.10" width="0.7" height="9.30" fill="#ffffff" opacity="0.12"/>
<rect x="549.35" y="27.10" width="0.7" height="9.30" fill="#ffffff" opacity="0.12"/>
<rect x="556.85" y="27.10" width="0.7" height="9.30" fill="#ffffff" opacity="0.12"/>
<rect x="582.05" y="27.10" width="0.7" height="9.30" fill="#ffffff" opacity="0.12"/>
<rect x="594.25" y="27.10" width="0.7" height="9.30" fill="#ffffff" opacity="0.12"/>
<rect x="615.05" y="27.10" width="0.7" height="9.30" fill="#ffffff" opacity="0.12"/>
<rect x="639.65" y="27.10" width="0.7" height="9.30" fill="#ffffff" opacity="0.12"/>
<rect x="652.15" y="27.10" width="0.7" height="9.30" fill="#ffffff" opacity="0.12"/>
<rect x="454.6" y="26.80" width="218.0" height="0.6" fill="#ffffff" opacity="0.12"/>
<text x="468.6" y="32.95" class="tt" font-size="2.5" font-weight="bold" fill="rgba(10,50,30,0.42)" text-anchor="middle">T</text>
<text x="488.1" y="32.95" class="tt" font-size="2.5" font-weight="bold" fill="rgba(10,50,30,0.42)" text-anchor="middle">Proprietà per 1/1</text>
<text x="510.0" y="32.95" class="tt" font-size="2.5" font-weight="bold" fill="rgba(10,50,30,0.42)" text-anchor="middle">SOLUOMBU</text>
<text x="525.5" y="32.95" class="tt" font-size="2.5" font-weight="bold" fill="rgba(10,50,30,0.42)" text-anchor="middle">16</text>
<text x="540.5" y="32.95" class="tt" font-size="2.5" font-weight="bold" fill="rgba(10,50,30,0.42)" text-anchor="middle">41</text>
<text x="569.8" y="32.95" class="tt" font-size="2.5" font-weight="bold" fill="rgba(10,50,30,0.42)" text-anchor="middle">BOSCO MISTO</text>
<text x="588.5" y="32.95" class="tt" font-size="2.5" font-weight="bold" fill="rgba(10,50,30,0.42)" text-anchor="middle">01</text>
<text x="605.0" y="32.95" class="tt" font-size="2.5" font-weight="bold" fill="rgba(10,50,30,0.42)" text-anchor="middle">1460</text>
<text x="617.4" y="31.15" class="tt" font-size="2.5" font-weight="bold" fill="rgba(10,50,30,0.42)">R.D. Euro: 0,45</text>
<text x="617.4" y="34.45" class="tt" font-size="2.5" font-weight="bold" fill="rgba(10,50,30,0.42)">R.A. Euro: 0,05</text>
<text x="646.2" y="32.95" class="tt" font-size="2.5" font-weight="bold" fill="rgba(10,50,30,0.42)" text-anchor="middle">2932</text>
<rect x="461.15" y="36.40" width="0.7" height="9.10" fill="#ffffff" opacity="0.12"/>
<rect x="475.45" y="36.40" width="0.7" height="9.10" fill="#ffffff" opacity="0.12"/>
<rect x="500.15" y="36.40" width="0.7" height="9.10" fill="#ffffff" opacity="0.12"/>
<rect x="519.15" y="36.40" width="0.7" height="9.10" fill="#ffffff" opacity="0.12"/>
<rect x="531.05" y="36.40" width="0.7" height="9.10" fill="#ffffff" opacity="0.12"/>
<rect x="549.35" y="36.40" width="0.7" height="9.10" fill="#ffffff" opacity="0.12"/>
<rect x="556.85" y="36.40" width="0.7" height="9.10" fill="#ffffff" opacity="0.12"/>
<rect x="582.05" y="36.40" width="0.7" height="9.10" fill="#ffffff" opacity="0.12"/>
<rect x="594.25" y="36.40" width="0.7" height="9.10" fill="#ffffff" opacity="0.12"/>
<rect x="615.05" y="36.40" width="0.7" height="9.10" fill="#ffffff" opacity="0.12"/>
<rect x="639.65" y="36.40" width="0.7" height="9.10" fill="#ffffff" opacity="0.12"/>
<rect x="652.15" y="36.40" width="0.7" height="9.10" fill="#ffffff" opacity="0.12"/>
<rect x="454.6" y="36.10" width="218.0" height="0.6" fill="#ffffff" opacity="0.12"/>
<text x="468.6" y="42.15" class="tt" font-size="2.5" font-weight="bold" fill="rgba(20,30,40,0.5)" text-anchor="middle">T</text>
<text x="488.1" y="42.15" class="tt" font-size="2.5" font-weight="bold" fill="rgba(20,30,40,0.5)" text-anchor="middle">Proprietà per 1/1</text>
<text x="510.0" y="42.15" class="tt" font-size="2.5" font-weight="bold" fill="rgba(20,30,40,0.5)" text-anchor="middle">SOLUOMBU</text>
<text x="525.5" y="42.15" class="tt" font-size="2.5" font-weight="bold" fill="rgba(20,30,40,0.5)" text-anchor="middle">16</text>
<text x="540.5" y="42.15" class="tt" font-size="2.5" font-weight="bold" fill="rgba(20,30,40,0.5)" text-anchor="middle">58</text>
<text x="569.8" y="42.15" class="tt" font-size="2.5" font-weight="bold" fill="rgba(20,30,40,0.5)" text-anchor="middle">BOSCO CEDUO</text>
<text x="588.5" y="42.15" class="tt" font-size="2.5" font-weight="bold" fill="rgba(20,30,40,0.5)" text-anchor="middle">02</text>
<text x="605.0" y="42.15" class="tt" font-size="2.5" font-weight="bold" fill="rgba(20,30,40,0.5)" text-anchor="middle">8</text>
<text x="617.4" y="40.35" class="tt" font-size="2.5" font-weight="bold" fill="rgba(20,30,40,0.5)">R.D. Euro: 0,01</text>
<text x="617.4" y="43.65" class="tt" font-size="2.5" font-weight="bold" fill="rgba(20,30,40,0.5)">R.A. Euro: 0,01</text>
<text x="646.2" y="42.15" class="tt" font-size="2.5" font-weight="bold" fill="rgba(20,30,40,0.5)" text-anchor="middle">1195</text>
<rect x="461.15" y="45.50" width="0.7" height="9.00" fill="#ffffff" opacity="0.12"/>
<rect x="475.45" y="45.50" width="0.7" height="9.00" fill="#ffffff" opacity="0.12"/>
<rect x="500.15" y="45.50" width="0.7" height="9.00" fill="#ffffff" opacity="0.12"/>
<rect x="519.15" y="45.50" width="0.7" height="9.00" fill="#ffffff" opacity="0.12"/>
<rect x="531.05" y="45.50" width="0.7" height="9.00" fill="#ffffff" opacity="0.12"/>
<rect x="549.35" y="45.50" width="0.7" height="9.00" fill="#ffffff" opacity="0.12"/>
<rect x="556.85" y="45.50" width="0.7" height="9.00" fill="#ffffff" opacity="0.12"/>
<rect x="582.05" y="45.50" width="0.7" height="9.00" fill="#ffffff" opacity="0.12"/>
<rect x="594.25" y="45.50" width="0.7" height="9.00" fill="#ffffff" opacity="0.12"/>
<rect x="615.05" y="45.50" width="0.7" height="9.00" fill="#ffffff" opacity="0.12"/>
<rect x="639.65" y="45.50" width="0.7" height="9.00" fill="#ffffff" opacity="0.12"/>
<rect x="652.15" y="45.50" width="0.7" height="9.00" fill="#ffffff" opacity="0.12"/>
<rect x="454.6" y="45.20" width="218.0" height="0.6" fill="#ffffff" opacity="0.12"/>
<text x="468.6" y="51.20" class="tt" font-size="2.5" font-weight="bold" fill="rgba(10,50,30,0.42)" text-anchor="middle">T</text>
<text x="488.1" y="51.20" class="tt" font-size="2.5" font-weight="bold" fill="rgba(10,50,30,0.42)" text-anchor="middle">Proprietà per 1/1</text>
<text x="510.0" y="51.20" class="tt" font-size="2.5" font-weight="bold" fill="rgba(10,50,30,0.42)" text-anchor="middle">SOLUOMBU</text>
<text x="525.5" y="51.20" class="tt" font-size="2.5" font-weight="bold" fill="rgba(10,50,30,0.42)" text-anchor="middle">16</text>
<text x="540.5" y="51.20" class="tt" font-size="2.5" font-weight="bold" fill="rgba(10,50,30,0.42)" text-anchor="middle">78</text>
<text x="569.8" y="51.20" class="tt" font-size="2.5" font-weight="bold" fill="rgba(10,50,30,0.42)" text-anchor="middle">BOSCO CEDUO</text>
<text x="588.5" y="51.20" class="tt" font-size="2.5" font-weight="bold" fill="rgba(10,50,30,0.42)" text-anchor="middle">01</text>
<text x="605.0" y="51.20" class="tt" font-size="2.5" font-weight="bold" fill="rgba(10,50,30,0.42)" text-anchor="middle">980</text>
<text x="617.4" y="49.40" class="tt" font-size="2.5" font-weight="bold" fill="rgba(10,50,30,0.42)">R.D. Euro: 0,30</text>
<text x="617.4" y="52.70" class="tt" font-size="2.5" font-weight="bold" fill="rgba(10,50,30,0.42)">R.A. Euro: 0,17</text>
<text x="646.2" y="51.20" class="tt" font-size="2.5" font-weight="bold" fill="rgba(10,50,30,0.42)" text-anchor="middle">1345</text>
<rect x="461.15" y="54.50" width="0.7" height="8.60" fill="#ffffff" opacity="0.12"/>
<rect x="475.45" y="54.50" width="0.7" height="8.60" fill="#ffffff" opacity="0.12"/>
<rect x="500.15" y="54.50" width="0.7" height="8.60" fill="#ffffff" opacity="0.12"/>
<rect x="519.15" y="54.50" width="0.7" height="8.60" fill="#ffffff" opacity="0.12"/>
<rect x="531.05" y="54.50" width="0.7" height="8.60" fill="#ffffff" opacity="0.12"/>
<rect x="549.35" y="54.50" width="0.7" height="8.60" fill="#ffffff" opacity="0.12"/>
<rect x="556.85" y="54.50" width="0.7" height="8.60" fill="#ffffff" opacity="0.12"/>
<rect x="582.05" y="54.50" width="0.7" height="8.60" fill="#ffffff" opacity="0.12"/>
<rect x="594.25" y="54.50" width="0.7" height="8.60" fill="#ffffff" opacity="0.12"/>
<rect x="615.05" y="54.50" width="0.7" height="8.60" fill="#ffffff" opacity="0.12"/>
<rect x="639.65" y="54.50" width="0.7" height="8.60" fill="#ffffff" opacity="0.12"/>
<rect x="652.15" y="54.50" width="0.7" height="8.60" fill="#ffffff" opacity="0.12"/>
<rect x="454.6" y="54.20" width="218.0" height="0.6" fill="#ffffff" opacity="0.12"/>
<text x="468.6" y="60.00" class="tt" font-size="2.5" font-weight="bold" fill="rgba(20,30,40,0.5)" text-anchor="middle">T</text>
<text x="488.1" y="60.00" class="tt" font-size="2.5" font-weight="bold" fill="rgba(20,30,40,0.5)" text-anchor="middle">Proprietà per 1/1</text>
<text x="510.0" y="60.00" class="tt" font-size="2.5" font-weight="bold" fill="rgba(20,30,40,0.5)" text-anchor="middle">SOLUOMBU</text>
<text x="525.5" y="60.00" class="tt" font-size="2.5" font-weight="bold" fill="rgba(20,30,40,0.5)" text-anchor="middle">16</text>
<text x="540.5" y="60.00" class="tt" font-size="2.5" font-weight="bold" fill="rgba(20,30,40,0.5)" text-anchor="middle">116</text>
<text x="569.8" y="60.00" class="tt" font-size="2.5" font-weight="bold" fill="rgba(20,30,40,0.5)" text-anchor="middle">BOSCO MISTO</text>
<text x="588.5" y="60.00" class="tt" font-size="2.5" font-weight="bold" fill="rgba(20,30,40,0.5)" text-anchor="middle">02</text>
<text x="605.0" y="60.00" class="tt" font-size="2.5" font-weight="bold" fill="rgba(20,30,40,0.5)" text-anchor="middle">3278</text>
<text x="617.4" y="58.20" class="tt" font-size="2.5" font-weight="bold" fill="rgba(20,30,40,0.5)">R.D. Euro: 0,68</text>
<text x="617.4" y="61.50" class="tt" font-size="2.5" font-weight="bold" fill="rgba(20,30,40,0.5)">R.A. Euro: 0,09</text>
<text x="646.2" y="60.00" class="tt" font-size="2.5" font-weight="bold" fill="rgba(20,30,40,0.5)" text-anchor="middle">2396</text>
<rect x="461.15" y="63.10" width="0.7" height="9.80" fill="#ffffff" opacity="0.12"/>
<rect x="475.45" y="63.10" width="0.7" height="9.80" fill="#ffffff" opacity="0.12"/>
<rect x="500.15" y="63.10" width="0.7" height="9.80" fill="#ffffff" opacity="0.12"/>
<rect x="519.15" y="63.10" width="0.7" height="9.80" fill="#ffffff" opacity="0.12"/>
<rect x="531.05" y="63.10" width="0.7" height="9.80" fill="#ffffff" opacity="0.12"/>
<rect x="549.35" y="63.10" width="0.7" height="9.80" fill="#ffffff" opacity="0.12"/>
<rect x="556.85" y="63.10" width="0.7" height="9.80" fill="#ffffff" opacity="0.12"/>
<rect x="582.05" y="63.10" width="0.7" height="9.80" fill="#ffffff" opacity="0.12"/>
<rect x="594.25" y="63.10" width="0.7" height="9.80" fill="#ffffff" opacity="0.12"/>
<rect x="615.05" y="63.10" width="0.7" height="9.80" fill="#ffffff" opacity="0.12"/>
<rect x="639.65" y="63.10" width="0.7" height="9.80" fill="#ffffff" opacity="0.12"/>
<rect x="652.15" y="63.10" width="0.7" height="9.80" fill="#ffffff" opacity="0.12"/>
<rect x="454.6" y="62.80" width="218.0" height="0.6" fill="#ffffff" opacity="0.12"/>
<text x="468.6" y="69.20" class="tt" font-size="2.5" font-weight="bold" fill="rgba(20,30,40,0.5)" text-anchor="middle">T</text>
<text x="488.1" y="69.20" class="tt" font-size="2.5" font-weight="bold" fill="rgba(20,30,40,0.5)" text-anchor="middle">Proprietà per 1/1</text>
<text x="510.0" y="69.20" class="tt" font-size="2.5" font-weight="bold" fill="rgba(20,30,40,0.5)" text-anchor="middle">SOLUOMBU</text>
<text x="525.5" y="69.20" class="tt" font-size="2.5" font-weight="bold" fill="rgba(20,30,40,0.5)" text-anchor="middle">16</text>
<text x="540.5" y="69.20" class="tt" font-size="2.5" font-weight="bold" fill="rgba(20,30,40,0.5)" text-anchor="middle">118</text>
<text x="569.8" y="69.20" class="tt" font-size="2.5" font-weight="bold" fill="rgba(20,30,40,0.5)" text-anchor="middle">INCOLT PROD</text>
<text x="588.5" y="69.20" class="tt" font-size="2.5" font-weight="bold" fill="rgba(20,30,40,0.5)" text-anchor="middle">U</text>
<text x="605.0" y="69.20" class="tt" font-size="2.5" font-weight="bold" fill="rgba(20,30,40,0.5)" text-anchor="middle">2467</text>
<text x="617.4" y="67.40" class="tt" font-size="2.5" font-weight="bold" fill="rgba(20,30,40,0.5)">R.D. Euro: 0,51</text>
<text x="617.4" y="70.70" class="tt" font-size="2.5" font-weight="bold" fill="rgba(20,30,40,0.5)">R.A. Euro: 0,17</text>
<text x="646.2" y="69.20" class="tt" font-size="2.5" font-weight="bold" fill="rgba(20,30,40,0.5)" text-anchor="middle">1717</text>
<rect x="461.15" y="72.90" width="0.7" height="9.10" fill="#ffffff" opacity="0.12"/>
<rect x="475.45" y="72.90" width="0.7" height="9.10" fill="#ffffff" opacity="0.12"/>
<rect x="500.15" y="72.90" width="0.7" height="9.10" fill="#ffffff" opacity="0.12"/>
<rect x="519.15" y="72.90" width="0.7" height="9.10" fill="#ffffff" opacity="0.12"/>
<rect x="531.05" y="72.90" width="0.7" height="9.10" fill="#ffffff" opacity="0.12"/>
<rect x="549.35" y="72.90" width="0.7" height="9.10" fill="#ffffff" opacity="0.12"/>
<rect x="556.85" y="72.90" width="0.7" height="9.10" fill="#ffffff" opacity="0.12"/>
<rect x="582.05" y="72.90" width="0.7" height="9.10" fill="#ffffff" opacity="0.12"/>
<rect x="594.25" y="72.90" width="0.7" height="9.10" fill="#ffffff" opacity="0.12"/>
<rect x="615.05" y="72.90" width="0.7" height="9.10" fill="#ffffff" opacity="0.12"/>
<rect x="639.65" y="72.90" width="0.7" height="9.10" fill="#ffffff" opacity="0.12"/>
<rect x="652.15" y="72.90" width="0.7" height="9.10" fill="#ffffff" opacity="0.12"/>
<rect x="454.6" y="72.60" width="218.0" height="0.6" fill="#ffffff" opacity="0.12"/>
<text x="468.6" y="78.65" class="tt" font-size="2.5" font-weight="bold" fill="rgba(10,40,60,0.36)" text-anchor="middle">T</text>
<text x="488.1" y="78.65" class="tt" font-size="2.5" font-weight="bold" fill="rgba(10,40,60,0.36)" text-anchor="middle">Proprietà per 1/1</text>
<text x="510.0" y="78.65" class="tt" font-size="2.5" font-weight="bold" fill="rgba(10,40,60,0.36)" text-anchor="middle">SOLUOMBU</text>
<text x="525.5" y="78.65" class="tt" font-size="2.5" font-weight="bold" fill="rgba(10,40,60,0.36)" text-anchor="middle">16</text>
<text x="540.5" y="78.65" class="tt" font-size="2.5" font-weight="bold" fill="rgba(10,40,60,0.36)" text-anchor="middle">143</text>
<text x="569.8" y="78.65" class="tt" font-size="2.5" font-weight="bold" fill="rgba(10,40,60,0.36)" text-anchor="middle">BOSCO CEDUO</text>
<text x="588.5" y="78.65" class="tt" font-size="2.5" font-weight="bold" fill="rgba(10,40,60,0.36)" text-anchor="middle">01</text>
<text x="605.0" y="78.65" class="tt" font-size="2.5" font-weight="bold" fill="rgba(10,40,60,0.36)" text-anchor="middle">3040</text>
<text x="617.4" y="76.85" class="tt" font-size="2.5" font-weight="bold" fill="rgba(10,40,60,0.36)">R.D. Euro: 0,47</text>
<text x="617.4" y="80.15" class="tt" font-size="2.5" font-weight="bold" fill="rgba(10,40,60,0.36)">R.A. Euro: 0,63</text>
<rect x="461.15" y="82.00" width="0.7" height="8.90" fill="#ffffff" opacity="0.12"/>
<rect x="475.45" y="82.00" width="0.7" height="8.90" fill="#ffffff" opacity="0.12"/>
<rect x="500.15" y="82.00" width="0.7" height="8.90" fill="#ffffff" opacity="0.12"/>
<rect x="519.15" y="82.00" width="0.7" height="8.90" fill="#ffffff" opacity="0.12"/>
<rect x="531.05" y="82.00" width="0.7" height="8.90" fill="#ffffff" opacity="0.12"/>
<rect x="549.35" y="82.00" width="0.7" height="8.90" fill="#ffffff" opacity="0.12"/>
<rect x="556.85" y="82.00" width="0.7" height="8.90" fill="#ffffff" opacity="0.12"/>
<rect x="582.05" y="82.00" width="0.7" height="8.90" fill="#ffffff" opacity="0.12"/>
<rect x="594.25" y="82.00" width="0.7" height="8.90" fill="#ffffff" opacity="0.12"/>
<rect x="615.05" y="82.00" width="0.7" height="8.90" fill="#ffffff" opacity="0.12"/>
<rect x="639.65" y="82.00" width="0.7" height="8.90" fill="#ffffff" opacity="0.12"/>
<rect x="652.15" y="82.00" width="0.7" height="8.90" fill="#ffffff" opacity="0.12"/>
<rect x="454.6" y="81.70" width="218.0" height="0.6" fill="#ffffff" opacity="0.12"/>
<text x="468.6" y="87.65" class="tt" font-size="2.5" font-weight="bold" fill="rgba(10,40,60,0.36)" text-anchor="middle">T</text>
<text x="488.1" y="87.65" class="tt" font-size="2.5" font-weight="bold" fill="rgba(10,40,60,0.36)" text-anchor="middle">Proprietà per 1/1</text>
<text x="510.0" y="87.65" class="tt" font-size="2.5" font-weight="bold" fill="rgba(10,40,60,0.36)" text-anchor="middle">SOLUOMBU</text>
<text x="525.5" y="87.65" class="tt" font-size="2.5" font-weight="bold" fill="rgba(10,40,60,0.36)" text-anchor="middle">16</text>
<text x="540.5" y="87.65" class="tt" font-size="2.5" font-weight="bold" fill="rgba(10,40,60,0.36)" text-anchor="middle">260</text>
<text x="569.8" y="87.65" class="tt" font-size="2.5" font-weight="bold" fill="rgba(10,40,60,0.36)" text-anchor="middle">BOSCO MISTO</text>
<text x="588.5" y="87.65" class="tt" font-size="2.5" font-weight="bold" fill="rgba(10,40,60,0.36)" text-anchor="middle">02</text>
<text x="605.0" y="87.65" class="tt" font-size="2.5" font-weight="bold" fill="rgba(10,40,60,0.36)" text-anchor="middle">2420</text>
<text x="617.4" y="85.85" class="tt" font-size="2.5" font-weight="bold" fill="rgba(10,40,60,0.36)">R.D. Euro: 2,75</text>
<text x="617.4" y="89.15" class="tt" font-size="2.5" font-weight="bold" fill="rgba(10,40,60,0.36)">R.A. Euro: 0,25</text>
<text x="646.2" y="87.65" class="tt" font-size="2.5" font-weight="bold" fill="rgba(10,40,60,0.36)" text-anchor="middle">2932</text>
<rect x="461.15" y="90.90" width="0.7" height="9.50" fill="#ffffff" opacity="0.12"/>
<rect x="475.45" y="90.90" width="0.7" height="9.50" fill="#ffffff" opacity="0.12"/>
<rect x="500.15" y="90.90" width="0.7" height="9.50" fill="#ffffff" opacity="0.12"/>
<rect x="519.15" y="90.90" width="0.7" height="9.50" fill="#ffffff" opacity="0.12"/>
<rect x="531.05" y="90.90" width="0.7" height="9.50" fill="#ffffff" opacity="0.12"/>
<rect x="549.35" y="90.90" width="0.7" height="9.50" fill="#ffffff" opacity="0.12"/>
<rect x="556.85" y="90.90" width="0.7" height="9.50" fill="#ffffff" opacity="0.12"/>
<rect x="582.05" y="90.90" width="0.7" height="9.50" fill="#ffffff" opacity="0.12"/>
<rect x="594.25" y="90.90" width="0.7" height="9.50" fill="#ffffff" opacity="0.12"/>
<rect x="615.05" y="90.90" width="0.7" height="9.50" fill="#ffffff" opacity="0.12"/>
<rect x="639.65" y="90.90" width="0.7" height="9.50" fill="#ffffff" opacity="0.12"/>
<rect x="652.15" y="90.90" width="0.7" height="9.50" fill="#ffffff" opacity="0.12"/>
<rect x="454.6" y="90.60" width="218.0" height="0.6" fill="#ffffff" opacity="0.12"/>
<text x="468.6" y="96.85" class="tt" font-size="2.5" font-weight="bold" fill="rgba(10,40,60,0.36)" text-anchor="middle">T</text>
<text x="488.1" y="96.85" class="tt" font-size="2.5" font-weight="bold" fill="rgba(10,40,60,0.36)" text-anchor="middle">Proprietà per 1/1</text>
<text x="510.0" y="96.85" class="tt" font-size="2.5" font-weight="bold" fill="rgba(10,40,60,0.36)" text-anchor="middle">SOLUOMBU</text>
<text x="525.5" y="96.85" class="tt" font-size="2.5" font-weight="bold" fill="rgba(10,40,60,0.36)" text-anchor="middle">16</text>
<text x="540.5" y="96.85" class="tt" font-size="2.5" font-weight="bold" fill="rgba(10,40,60,0.36)" text-anchor="middle">286</text>
<text x="569.8" y="96.85" class="tt" font-size="2.5" font-weight="bold" fill="rgba(10,40,60,0.36)" text-anchor="middle">PRATO</text>
<text x="588.5" y="96.85" class="tt" font-size="2.5" font-weight="bold" fill="rgba(10,40,60,0.36)" text-anchor="middle">03</text>
<text x="605.0" y="96.85" class="tt" font-size="2.5" font-weight="bold" fill="rgba(10,40,60,0.36)" text-anchor="middle">2470</text>
<text x="617.4" y="95.05" class="tt" font-size="2.5" font-weight="bold" fill="rgba(10,40,60,0.36)">R.D. Euro: 2,55</text>
<text x="617.4" y="98.35" class="tt" font-size="2.5" font-weight="bold" fill="rgba(10,40,60,0.36)">R.A. Euro: 1,66</text>
<text x="646.2" y="96.85" class="tt" font-size="2.5" font-weight="bold" fill="rgba(10,40,60,0.36)" text-anchor="middle">315</text>
<rect x="461.15" y="100.40" width="0.7" height="9.50" fill="#ffffff" opacity="0.12"/>
<rect x="475.45" y="100.40" width="0.7" height="9.50" fill="#ffffff" opacity="0.12"/>
<rect x="500.15" y="100.40" width="0.7" height="9.50" fill="#ffffff" opacity="0.12"/>
<rect x="519.15" y="100.40" width="0.7" height="9.50" fill="#ffffff" opacity="0.12"/>
<rect x="531.05" y="100.40" width="0.7" height="9.50" fill="#ffffff" opacity="0.12"/>
<rect x="549.35" y="100.40" width="0.7" height="9.50" fill="#ffffff" opacity="0.12"/>
<rect x="556.85" y="100.40" width="0.7" height="9.50" fill="#ffffff" opacity="0.12"/>
<rect x="582.05" y="100.40" width="0.7" height="9.50" fill="#ffffff" opacity="0.12"/>
<rect x="594.25" y="100.40" width="0.7" height="9.50" fill="#ffffff" opacity="0.12"/>
<rect x="615.05" y="100.40" width="0.7" height="9.50" fill="#ffffff" opacity="0.12"/>
<rect x="639.65" y="100.40" width="0.7" height="9.50" fill="#ffffff" opacity="0.12"/>
<rect x="652.15" y="100.40" width="0.7" height="9.50" fill="#ffffff" opacity="0.12"/>
<rect x="454.6" y="100.10" width="218.0" height="0.6" fill="#ffffff" opacity="0.12"/>
<text x="468.6" y="106.35" class="tt" font-size="2.5" font-weight="bold" fill="rgba(10,40,60,0.36)" text-anchor="middle">T</text>
<text x="488.1" y="106.35" class="tt" font-size="2.5" font-weight="bold" fill="rgba(10,40,60,0.36)" text-anchor="middle">Proprietà per 1/1</text>
<text x="510.0" y="106.35" class="tt" font-size="2.5" font-weight="bold" fill="rgba(10,40,60,0.36)" text-anchor="middle">SOLUOMBU</text>
<text x="525.5" y="106.35" class="tt" font-size="2.5" font-weight="bold" fill="rgba(10,40,60,0.36)" text-anchor="middle">16</text>
<text x="540.5" y="106.35" class="tt" font-size="2.5" font-weight="bold" fill="rgba(10,40,60,0.36)" text-anchor="middle">287</text>
<text x="569.8" y="106.35" class="tt" font-size="2.5" font-weight="bold" fill="rgba(10,40,60,0.36)" text-anchor="middle">PRATO</text>
<text x="588.5" y="106.35" class="tt" font-size="2.5" font-weight="bold" fill="rgba(10,40,60,0.36)" text-anchor="middle">03</text>
<text x="605.0" y="106.35" class="tt" font-size="2.5" font-weight="bold" fill="rgba(10,40,60,0.36)" text-anchor="middle">4410</text>
<text x="617.4" y="104.55" class="tt" font-size="2.5" font-weight="bold" fill="rgba(10,40,60,0.36)">R.D. Euro: 4,57</text>
<text x="617.4" y="107.85" class="tt" font-size="2.5" font-weight="bold" fill="rgba(10,40,60,0.36)">R.A. Euro: 1,86</text>
<text x="646.2" y="106.35" class="tt" font-size="2.5" font-weight="bold" fill="rgba(10,40,60,0.36)" text-anchor="middle">315</text>
<rect x="461.15" y="109.90" width="0.7" height="9.50" fill="#ffffff" opacity="0.12"/>
<rect x="475.45" y="109.90" width="0.7" height="9.50" fill="#ffffff" opacity="0.12"/>
<rect x="500.15" y="109.90" width="0.7" height="9.50" fill="#ffffff" opacity="0.12"/>
<rect x="519.15" y="109.90" width="0.7" height="9.50" fill="#ffffff" opacity="0.12"/>
<rect x="531.05" y="109.90" width="0.7" height="9.50" fill="#ffffff" opacity="0.12"/>
<rect x="549.35" y="109.90" width="0.7" height="9.50" fill="#ffffff" opacity="0.12"/>
<rect x="556.85" y="109.90" width="0.7" height="9.50" fill="#ffffff" opacity="0.12"/>
<rect x="582.05" y="109.90" width="0.7" height="9.50" fill="#ffffff" opacity="0.12"/>
<rect x="594.25" y="109.90" width="0.7" height="9.50" fill="#ffffff" opacity="0.12"/>
<rect x="615.05" y="109.90" width="0.7" height="9.50" fill="#ffffff" opacity="0.12"/>
<rect x="639.65" y="109.90" width="0.7" height="9.50" fill="#ffffff" opacity="0.12"/>
<rect x="652.15" y="109.90" width="0.7" height="9.50" fill="#ffffff" opacity="0.12"/>
<rect x="454.6" y="109.60" width="218.0" height="0.6" fill="#ffffff" opacity="0.12"/>
<text x="468.6" y="115.85" class="tt" font-size="2.5" font-weight="bold" fill="rgba(10,40,60,0.36)" text-anchor="middle">T</text>
<text x="488.1" y="115.85" class="tt" font-size="2.5" font-weight="bold" fill="rgba(10,40,60,0.36)" text-anchor="middle">Proprietà per 1/1</text>
<text x="510.0" y="115.85" class="tt" font-size="2.5" font-weight="bold" fill="rgba(10,40,60,0.36)" text-anchor="middle">SOLUOMBU</text>
<text x="525.5" y="115.85" class="tt" font-size="2.5" font-weight="bold" fill="rgba(10,40,60,0.36)" text-anchor="middle">16</text>
<text x="540.5" y="115.85" class="tt" font-size="2.5" font-weight="bold" fill="rgba(10,40,60,0.36)" text-anchor="middle">400</text>
<text x="569.8" y="115.85" class="tt" font-size="2.5" font-weight="bold" fill="rgba(10,40,60,0.36)" text-anchor="middle">BOSCO MISTO</text>
<text x="588.5" y="115.85" class="tt" font-size="2.5" font-weight="bold" fill="rgba(10,40,60,0.36)" text-anchor="middle">01</text>
<text x="605.0" y="115.85" class="tt" font-size="2.5" font-weight="bold" fill="rgba(10,40,60,0.36)" text-anchor="middle">950</text>
<text x="617.4" y="114.05" class="tt" font-size="2.5" font-weight="bold" fill="rgba(10,40,60,0.36)">R.D. Euro: 0,74</text>
<text x="617.4" y="117.35" class="tt" font-size="2.5" font-weight="bold" fill="rgba(10,40,60,0.36)">R.A. Euro: 0,10</text>
<text x="646.2" y="115.85" class="tt" font-size="2.5" font-weight="bold" fill="rgba(10,40,60,0.36)" text-anchor="middle">295</text>
<rect x="461.15" y="119.40" width="0.7" height="9.50" fill="#ffffff" opacity="0.12"/>
<rect x="475.45" y="119.40" width="0.7" height="9.50" fill="#ffffff" opacity="0.12"/>
<rect x="500.15" y="119.40" width="0.7" height="9.50" fill="#ffffff" opacity="0.12"/>
<rect x="519.15" y="119.40" width="0.7" height="9.50" fill="#ffffff" opacity="0.12"/>
<rect x="531.05" y="119.40" width="0.7" height="9.50" fill="#ffffff" opacity="0.12"/>
<rect x="549.35" y="119.40" width="0.7" height="9.50" fill="#ffffff" opacity="0.12"/>
<rect x="556.85" y="119.40" width="0.7" height="9.50" fill="#ffffff" opacity="0.12"/>
<rect x="582.05" y="119.40" width="0.7" height="9.50" fill="#ffffff" opacity="0.12"/>
<rect x="594.25" y="119.40" width="0.7" height="9.50" fill="#ffffff" opacity="0.12"/>
<rect x="615.05" y="119.40" width="0.7" height="9.50" fill="#ffffff" opacity="0.12"/>
<rect x="639.65" y="119.40" width="0.7" height="9.50" fill="#ffffff" opacity="0.12"/>
<rect x="652.15" y="119.40" width="0.7" height="9.50" fill="#ffffff" opacity="0.12"/>
<rect x="454.6" y="119.10" width="218.0" height="0.6" fill="#ffffff" opacity="0.12"/>
<text x="468.6" y="125.35" class="tt" font-size="2.5" font-weight="bold" fill="rgba(10,40,60,0.36)" text-anchor="middle">T</text>
<text x="488.1" y="125.35" class="tt" font-size="2.5" font-weight="bold" fill="rgba(10,40,60,0.36)" text-anchor="middle">Proprietà per 1/1</text>
<text x="510.0" y="125.35" class="tt" font-size="2.5" font-weight="bold" fill="rgba(10,40,60,0.36)" text-anchor="middle">SOLUOMBU</text>
<text x="525.5" y="125.35" class="tt" font-size="2.5" font-weight="bold" fill="rgba(10,40,60,0.36)" text-anchor="middle">16</text>
<text x="540.5" y="125.35" class="tt" font-size="2.5" font-weight="bold" fill="rgba(10,40,60,0.36)" text-anchor="middle">446</text>
<text x="569.8" y="125.35" class="tt" font-size="2.5" font-weight="bold" fill="rgba(10,40,60,0.36)" text-anchor="middle">BOSCO MISTO</text>
<text x="588.5" y="125.35" class="tt" font-size="2.5" font-weight="bold" fill="rgba(10,40,60,0.36)" text-anchor="middle">01</text>
<text x="605.0" y="125.35" class="tt" font-size="2.5" font-weight="bold" fill="rgba(10,40,60,0.36)" text-anchor="middle">980</text>
<text x="617.4" y="123.55" class="tt" font-size="2.5" font-weight="bold" fill="rgba(10,40,60,0.36)">R.D. Euro: 0,76</text>
<text x="617.4" y="126.85" class="tt" font-size="2.5" font-weight="bold" fill="rgba(10,40,60,0.36)">R.A. Euro: 0,10</text>
<text x="646.2" y="125.35" class="tt" font-size="2.5" font-weight="bold" fill="rgba(10,40,60,0.36)" text-anchor="middle">295</text>
<rect x="461.15" y="128.90" width="0.7" height="9.20" fill="#ffffff" opacity="0.12"/>
<rect x="475.45" y="128.90" width="0.7" height="9.20" fill="#ffffff" opacity="0.12"/>
<rect x="500.15" y="128.90" width="0.7" height="9.20" fill="#ffffff" opacity="0.12"/>
<rect x="519.15" y="128.90" width="0.7" height="9.20" fill="#ffffff" opacity="0.12"/>
<rect x="531.05" y="128.90" width="0.7" height="9.20" fill="#ffffff" opacity="0.12"/>
<rect x="549.35" y="128.90" width="0.7" height="9.20" fill="#ffffff" opacity="0.12"/>
<rect x="556.85" y="128.90" width="0.7" height="9.20" fill="#ffffff" opacity="0.12"/>
<rect x="582.05" y="128.90" width="0.7" height="9.20" fill="#ffffff" opacity="0.12"/>
<rect x="594.25" y="128.90" width="0.7" height="9.20" fill="#ffffff" opacity="0.12"/>
<rect x="615.05" y="128.90" width="0.7" height="9.20" fill="#ffffff" opacity="0.12"/>
<rect x="639.65" y="128.90" width="0.7" height="9.20" fill="#ffffff" opacity="0.12"/>
<rect x="652.15" y="128.90" width="0.7" height="9.20" fill="#ffffff" opacity="0.12"/>
<rect x="454.6" y="128.60" width="218.0" height="0.6" fill="#ffffff" opacity="0.12"/>
<text x="468.6" y="134.70" class="tt" font-size="2.5" font-weight="bold" fill="rgba(10,40,60,0.36)" text-anchor="middle">T</text>
<text x="488.1" y="134.70" class="tt" font-size="2.5" font-weight="bold" fill="rgba(10,40,60,0.36)" text-anchor="middle">Proprietà per 1/1</text>
<text x="510.0" y="134.70" class="tt" font-size="2.5" font-weight="bold" fill="rgba(10,40,60,0.36)" text-anchor="middle">SOLUOMBU</text>
<text x="525.5" y="134.70" class="tt" font-size="2.5" font-weight="bold" fill="rgba(10,40,60,0.36)" text-anchor="middle">16</text>
<text x="540.5" y="134.70" class="tt" font-size="2.5" font-weight="bold" fill="rgba(10,40,60,0.36)" text-anchor="middle">460</text>
<text x="569.8" y="134.70" class="tt" font-size="2.5" font-weight="bold" fill="rgba(10,40,60,0.36)" text-anchor="middle">BOSCO MISTO</text>
<text x="588.5" y="134.70" class="tt" font-size="2.5" font-weight="bold" fill="rgba(10,40,60,0.36)" text-anchor="middle">02</text>
<text x="605.0" y="134.70" class="tt" font-size="2.5" font-weight="bold" fill="rgba(10,40,60,0.36)" text-anchor="middle">38755</text>
<text x="617.4" y="132.90" class="tt" font-size="2.5" font-weight="bold" fill="rgba(10,40,60,0.36)">R.D. Euro: 20,02</text>
<text x="617.4" y="136.20" class="tt" font-size="2.5" font-weight="bold" fill="rgba(10,40,60,0.36)">R.A. Euro: 2,00</text>
<rect x="461.15" y="138.10" width="0.7" height="9.10" fill="#ffffff" opacity="0.12"/>
<rect x="475.45" y="138.10" width="0.7" height="9.10" fill="#ffffff" opacity="0.12"/>
<rect x="500.15" y="138.10" width="0.7" height="9.10" fill="#ffffff" opacity="0.12"/>
<rect x="519.15" y="138.10" width="0.7" height="9.10" fill="#ffffff" opacity="0.12"/>
<rect x="531.05" y="138.10" width="0.7" height="9.10" fill="#ffffff" opacity="0.12"/>
<rect x="549.35" y="138.10" width="0.7" height="9.10" fill="#ffffff" opacity="0.12"/>
<rect x="556.85" y="138.10" width="0.7" height="9.10" fill="#ffffff" opacity="0.12"/>
<rect x="582.05" y="138.10" width="0.7" height="9.10" fill="#ffffff" opacity="0.12"/>
<rect x="594.25" y="138.10" width="0.7" height="9.10" fill="#ffffff" opacity="0.12"/>
<rect x="615.05" y="138.10" width="0.7" height="9.10" fill="#ffffff" opacity="0.12"/>
<rect x="639.65" y="138.10" width="0.7" height="9.10" fill="#ffffff" opacity="0.12"/>
<rect x="652.15" y="138.10" width="0.7" height="9.10" fill="#ffffff" opacity="0.12"/>
<rect x="454.6" y="137.80" width="218.0" height="0.6" fill="#ffffff" opacity="0.12"/>
<text x="468.6" y="143.85" class="tt" font-size="2.5" font-weight="bold" fill="rgba(10,50,30,0.42)" text-anchor="middle">T</text>
<text x="488.1" y="143.85" class="tt" font-size="2.5" font-weight="bold" fill="rgba(10,50,30,0.42)" text-anchor="middle">Proprietà per 1/1</text>
<text x="510.0" y="143.85" class="tt" font-size="2.5" font-weight="bold" fill="rgba(10,50,30,0.42)" text-anchor="middle">SOLUOMBU</text>
<text x="525.5" y="143.85" class="tt" font-size="2.5" font-weight="bold" fill="rgba(10,50,30,0.42)" text-anchor="middle">16</text>
<text x="540.5" y="143.85" class="tt" font-size="2.5" font-weight="bold" fill="rgba(10,50,30,0.42)" text-anchor="middle">440</text>
<text x="569.8" y="143.85" class="tt" font-size="2.5" font-weight="bold" fill="rgba(10,50,30,0.42)" text-anchor="middle">PRATO</text>
<text x="588.5" y="143.85" class="tt" font-size="2.5" font-weight="bold" fill="rgba(10,50,30,0.42)" text-anchor="middle">03</text>
<text x="605.0" y="143.85" class="tt" font-size="2.5" font-weight="bold" fill="rgba(10,50,30,0.42)" text-anchor="middle">5610</text>
<text x="617.4" y="142.05" class="tt" font-size="2.5" font-weight="bold" fill="rgba(10,50,30,0.42)">R.D. Euro: 10,55</text>
<text x="617.4" y="145.35" class="tt" font-size="2.5" font-weight="bold" fill="rgba(10,50,30,0.42)">R.A. Euro: 4,06</text>
<rect x="461.15" y="147.20" width="0.7" height="8.60" fill="#ffffff" opacity="0.12"/>
<rect x="475.45" y="147.20" width="0.7" height="8.60" fill="#ffffff" opacity="0.12"/>
<rect x="500.15" y="147.20" width="0.7" height="8.60" fill="#ffffff" opacity="0.12"/>
<rect x="519.15" y="147.20" width="0.7" height="8.60" fill="#ffffff" opacity="0.12"/>
<rect x="531.05" y="147.20" width="0.7" height="8.60" fill="#ffffff" opacity="0.12"/>
<rect x="549.35" y="147.20" width="0.7" height="8.60" fill="#ffffff" opacity="0.12"/>
<rect x="556.85" y="147.20" width="0.7" height="8.60" fill="#ffffff" opacity="0.12"/>
<rect x="582.05" y="147.20" width="0.7" height="8.60" fill="#ffffff" opacity="0.12"/>
<rect x="594.25" y="147.20" width="0.7" height="8.60" fill="#ffffff" opacity="0.12"/>
<rect x="615.05" y="147.20" width="0.7" height="8.60" fill="#ffffff" opacity="0.12"/>
<rect x="639.65" y="147.20" width="0.7" height="8.60" fill="#ffffff" opacity="0.12"/>
<rect x="652.15" y="147.20" width="0.7" height="8.60" fill="#ffffff" opacity="0.12"/>
<rect x="454.6" y="146.90" width="218.0" height="0.6" fill="#ffffff" opacity="0.12"/>
<text x="468.6" y="152.70" class="tt" font-size="2.5" font-weight="bold" fill="rgba(20,30,40,0.5)" text-anchor="middle">T</text>
<text x="488.1" y="152.70" class="tt" font-size="2.5" font-weight="bold" fill="rgba(20,30,40,0.5)" text-anchor="middle">Proprietà per 1/1</text>
<text x="510.0" y="152.70" class="tt" font-size="2.5" font-weight="bold" fill="rgba(20,30,40,0.5)" text-anchor="middle">SOLUOMBU</text>
<text x="525.5" y="152.70" class="tt" font-size="2.5" font-weight="bold" fill="rgba(20,30,40,0.5)" text-anchor="middle">16</text>
<text x="540.5" y="152.70" class="tt" font-size="2.5" font-weight="bold" fill="rgba(20,30,40,0.5)" text-anchor="middle">458</text>
<text x="569.8" y="152.70" class="tt" font-size="2.5" font-weight="bold" fill="rgba(20,30,40,0.5)" text-anchor="middle">BOSCO CEDUO</text>
<text x="588.5" y="152.70" class="tt" font-size="2.5" font-weight="bold" fill="rgba(20,30,40,0.5)" text-anchor="middle">02</text>
<text x="605.0" y="152.70" class="tt" font-size="2.5" font-weight="bold" fill="rgba(20,30,40,0.5)" text-anchor="middle">780</text>
<text x="617.4" y="150.90" class="tt" font-size="2.5" font-weight="bold" fill="rgba(20,30,40,0.5)">R.D. Euro: 0,24</text>
<text x="617.4" y="154.20" class="tt" font-size="2.5" font-weight="bold" fill="rgba(20,30,40,0.5)">R.A. Euro: 0,03</text>
<rect x="461.15" y="155.80" width="0.7" height="9.70" fill="#ffffff" opacity="0.12"/>
<rect x="475.45" y="155.80" width="0.7" height="9.70" fill="#ffffff" opacity="0.12"/>
<rect x="500.15" y="155.80" width="0.7" height="9.70" fill="#ffffff" opacity="0.12"/>
<rect x="519.15" y="155.80" width="0.7" height="9.70" fill="#ffffff" opacity="0.12"/>
<rect x="531.05" y="155.80" width="0.7" height="9.70" fill="#ffffff" opacity="0.12"/>
<rect x="549.35" y="155.80" width="0.7" height="9.70" fill="#ffffff" opacity="0.12"/>
<rect x="556.85" y="155.80" width="0.7" height="9.70" fill="#ffffff" opacity="0.12"/>
<rect x="582.05" y="155.80" width="0.7" height="9.70" fill="#ffffff" opacity="0.12"/>
<rect x="594.25" y="155.80" width="0.7" height="9.70" fill="#ffffff" opacity="0.12"/>
<rect x="615.05" y="155.80" width="0.7" height="9.70" fill="#ffffff" opacity="0.12"/>
<rect x="639.65" y="155.80" width="0.7" height="9.70" fill="#ffffff" opacity="0.12"/>
<rect x="652.15" y="155.80" width="0.7" height="9.70" fill="#ffffff" opacity="0.12"/>
<rect x="454.6" y="155.50" width="218.0" height="0.6" fill="#ffffff" opacity="0.12"/>
<text x="468.6" y="161.85" class="tt" font-size="2.5" font-weight="bold" fill="rgba(10,40,60,0.36)" text-anchor="middle">T</text>
<text x="488.1" y="161.85" class="tt" font-size="2.5" font-weight="bold" fill="rgba(10,40,60,0.36)" text-anchor="middle">Proprietà per 1/1</text>
<text x="510.0" y="161.85" class="tt" font-size="2.5" font-weight="bold" fill="rgba(10,40,60,0.36)" text-anchor="middle">SOLUOMBU</text>
<text x="525.5" y="161.85" class="tt" font-size="2.5" font-weight="bold" fill="rgba(10,40,60,0.36)" text-anchor="middle">16</text>
<text x="540.5" y="161.85" class="tt" font-size="2.5" font-weight="bold" fill="rgba(10,40,60,0.36)" text-anchor="middle">443</text>
<text x="569.8" y="161.85" class="tt" font-size="2.5" font-weight="bold" fill="rgba(10,40,60,0.36)" text-anchor="middle">BOSCO CEDUO</text>
<text x="588.5" y="161.85" class="tt" font-size="2.5" font-weight="bold" fill="rgba(10,40,60,0.36)" text-anchor="middle">01</text>
<text x="605.0" y="161.85" class="tt" font-size="2.5" font-weight="bold" fill="rgba(10,40,60,0.36)" text-anchor="middle">1720</text>
<text x="617.4" y="160.05" class="tt" font-size="2.5" font-weight="bold" fill="rgba(10,40,60,0.36)">R.D. Euro: 1,33</text>
<text x="617.4" y="163.35" class="tt" font-size="2.5" font-weight="bold" fill="rgba(10,40,60,0.36)">R.A. Euro: 0,18</text>
<rect x="461.15" y="165.50" width="0.7" height="9.00" fill="#ffffff" opacity="0.12"/>
<rect x="475.45" y="165.50" width="0.7" height="9.00" fill="#ffffff" opacity="0.12"/>
<rect x="500.15" y="165.50" width="0.7" height="9.00" fill="#ffffff" opacity="0.12"/>
<rect x="519.15" y="165.50" width="0.7" height="9.00" fill="#ffffff" opacity="0.12"/>
<rect x="531.05" y="165.50" width="0.7" height="9.00" fill="#ffffff" opacity="0.12"/>
<rect x="549.35" y="165.50" width="0.7" height="9.00" fill="#ffffff" opacity="0.12"/>
<rect x="556.85" y="165.50" width="0.7" height="9.00" fill="#ffffff" opacity="0.12"/>
<rect x="582.05" y="165.50" width="0.7" height="9.00" fill="#ffffff" opacity="0.12"/>
<rect x="594.25" y="165.50" width="0.7" height="9.00" fill="#ffffff" opacity="0.12"/>
<rect x="615.05" y="165.50" width="0.7" height="9.00" fill="#ffffff" opacity="0.12"/>
<rect x="639.65" y="165.50" width="0.7" height="9.00" fill="#ffffff" opacity="0.12"/>
<rect x="652.15" y="165.50" width="0.7" height="9.00" fill="#ffffff" opacity="0.12"/>
<rect x="454.6" y="165.20" width="218.0" height="0.6" fill="#ffffff" opacity="0.12"/>
<text x="468.6" y="171.20" class="tt" font-size="2.5" font-weight="bold" fill="rgba(10,40,60,0.36)" text-anchor="middle">T</text>
<text x="488.1" y="171.20" class="tt" font-size="2.5" font-weight="bold" fill="rgba(10,40,60,0.36)" text-anchor="middle">Proprietà per 1/1</text>
<text x="510.0" y="171.20" class="tt" font-size="2.5" font-weight="bold" fill="rgba(10,40,60,0.36)" text-anchor="middle">SOLUOMBU</text>
<text x="525.5" y="171.20" class="tt" font-size="2.5" font-weight="bold" fill="rgba(10,40,60,0.36)" text-anchor="middle">16</text>
<text x="540.5" y="171.20" class="tt" font-size="2.5" font-weight="bold" fill="rgba(10,40,60,0.36)" text-anchor="middle">444</text>
<text x="569.8" y="171.20" class="tt" font-size="2.5" font-weight="bold" fill="rgba(10,40,60,0.36)" text-anchor="middle">BOSCO CEDUO</text>
<text x="588.5" y="171.20" class="tt" font-size="2.5" font-weight="bold" fill="rgba(10,40,60,0.36)" text-anchor="middle">01</text>
<text x="605.0" y="171.20" class="tt" font-size="2.5" font-weight="bold" fill="rgba(10,40,60,0.36)" text-anchor="middle">1077</text>
<text x="617.4" y="169.40" class="tt" font-size="2.5" font-weight="bold" fill="rgba(10,40,60,0.36)">R.D. Euro: 1,95</text>
<text x="617.4" y="172.70" class="tt" font-size="2.5" font-weight="bold" fill="rgba(10,40,60,0.36)">R.A. Euro: 0,77</text>
<rect x="461.15" y="174.50" width="0.7" height="9.80" fill="#ffffff" opacity="0.75"/>
<rect x="475.45" y="174.50" width="0.7" height="9.80" fill="#ffffff" opacity="0.75"/>
<rect x="500.15" y="174.50" width="0.7" height="9.80" fill="#ffffff" opacity="0.75"/>
<rect x="519.15" y="174.50" width="0.7" height="9.80" fill="#ffffff" opacity="0.75"/>
<rect x="531.05" y="174.50" width="0.7" height="9.80" fill="#ffffff" opacity="0.75"/>
<rect x="549.35" y="174.50" width="0.7" height="9.80" fill="#ffffff" opacity="0.75"/>
<rect x="556.85" y="174.50" width="0.7" height="9.80" fill="#ffffff" opacity="0.75"/>
<rect x="582.05" y="174.50" width="0.7" height="9.80" fill="#ffffff" opacity="0.75"/>
<rect x="594.25" y="174.50" width="0.7" height="9.80" fill="#ffffff" opacity="0.75"/>
<rect x="615.05" y="174.50" width="0.7" height="9.80" fill="#ffffff" opacity="0.75"/>
<rect x="639.65" y="174.50" width="0.7" height="9.80" fill="#ffffff" opacity="0.75"/>
<rect x="652.15" y="174.50" width="0.7" height="9.80" fill="#ffffff" opacity="0.75"/>
<rect x="454.6" y="174.20" width="218.0" height="0.6" fill="#ffffff" opacity="0.75"/>
<text x="468.6" y="180.60" class="tt" font-size="2.5" font-weight="bold" fill="rgba(30,30,40,0.6)" text-anchor="middle">T</text>
<text x="488.1" y="180.60" class="tt" font-size="2.5" font-weight="bold" fill="rgba(30,30,40,0.6)" text-anchor="middle">Proprietà per 1/1</text>
<text x="510.0" y="180.60" class="tt" font-size="2.5" font-weight="bold" fill="rgba(30,30,40,0.6)" text-anchor="middle">SOLUOMBU</text>
<text x="525.5" y="180.60" class="tt" font-size="2.5" font-weight="bold" fill="rgba(30,30,40,0.6)" text-anchor="middle">16</text>
<text x="540.5" y="180.60" class="tt" font-size="2.5" font-weight="bold" fill="rgba(30,30,40,0.6)" text-anchor="middle">437</text>
<text x="569.8" y="180.60" class="tt" font-size="2.5" font-weight="bold" fill="rgba(30,30,40,0.6)" text-anchor="middle">RELIT STRAD</text>
<text x="605.0" y="180.60" class="tt" font-size="2.5" font-weight="bold" fill="rgba(30,30,40,0.6)" text-anchor="middle">299</text>
<text x="617.4" y="178.80" class="tt" font-size="2.5" font-weight="bold" fill="rgba(30,30,40,0.6)">R.D. Euro:</text>
<text x="617.4" y="182.10" class="tt" font-size="2.5" font-weight="bold" fill="rgba(30,30,40,0.6)">R.A. Euro:</text>
<rect x="461.15" y="184.30" width="0.7" height="8.80" fill="#ffffff" opacity="0.75"/>
<rect x="475.45" y="184.30" width="0.7" height="8.80" fill="#ffffff" opacity="0.75"/>
<rect x="500.15" y="184.30" width="0.7" height="8.80" fill="#ffffff" opacity="0.75"/>
<rect x="519.15" y="184.30" width="0.7" height="8.80" fill="#ffffff" opacity="0.75"/>
<rect x="531.05" y="184.30" width="0.7" height="8.80" fill="#ffffff" opacity="0.75"/>
<rect x="549.35" y="184.30" width="0.7" height="8.80" fill="#ffffff" opacity="0.75"/>
<rect x="556.85" y="184.30" width="0.7" height="8.80" fill="#ffffff" opacity="0.75"/>
<rect x="582.05" y="184.30" width="0.7" height="8.80" fill="#ffffff" opacity="0.75"/>
<rect x="594.25" y="184.30" width="0.7" height="8.80" fill="#ffffff" opacity="0.75"/>
<rect x="615.05" y="184.30" width="0.7" height="8.80" fill="#ffffff" opacity="0.75"/>
<rect x="639.65" y="184.30" width="0.7" height="8.80" fill="#ffffff" opacity="0.75"/>
<rect x="652.15" y="184.30" width="0.7" height="8.80" fill="#ffffff" opacity="0.75"/>
<rect x="454.6" y="184.00" width="218.0" height="0.6" fill="#ffffff" opacity="0.75"/>
<text x="468.6" y="189.90" class="tt" font-size="2.5" font-weight="bold" fill="rgba(30,30,40,0.6)" text-anchor="middle">T</text>
<text x="488.1" y="189.90" class="tt" font-size="2.5" font-weight="bold" fill="rgba(30,30,40,0.6)" text-anchor="middle">Proprietà per 1/1</text>
<text x="510.0" y="189.90" class="tt" font-size="2.5" font-weight="bold" fill="rgba(30,30,40,0.6)" text-anchor="middle">SOLUOMBU</text>
<text x="525.5" y="189.90" class="tt" font-size="2.5" font-weight="bold" fill="rgba(30,30,40,0.6)" text-anchor="middle">16</text>
<text x="540.5" y="189.90" class="tt" font-size="2.5" font-weight="bold" fill="rgba(30,30,40,0.6)" text-anchor="middle">438</text>
<text x="569.8" y="189.90" class="tt" font-size="2.5" font-weight="bold" fill="rgba(30,30,40,0.6)" text-anchor="middle">RELIT STRAD</text>
<text x="605.0" y="189.90" class="tt" font-size="2.5" font-weight="bold" fill="rgba(30,30,40,0.6)" text-anchor="middle">105</text>
<text x="617.4" y="188.10" class="tt" font-size="2.5" font-weight="bold" fill="rgba(30,30,40,0.6)">R.D. Euro:</text>
<text x="617.4" y="191.40" class="tt" font-size="2.5" font-weight="bold" fill="rgba(30,30,40,0.6)">R.A. Euro:</text>
<rect x="461.15" y="193.10" width="0.7" height="9.40" fill="#ffffff" opacity="0.75"/>
<rect x="475.45" y="193.10" width="0.7" height="9.40" fill="#ffffff" opacity="0.75"/>
<rect x="500.15" y="193.10" width="0.7" height="9.40" fill="#ffffff" opacity="0.75"/>
<rect x="519.15" y="193.10" width="0.7" height="9.40" fill="#ffffff" opacity="0.75"/>
<rect x="531.05" y="193.10" width="0.7" height="9.40" fill="#ffffff" opacity="0.75"/>
<rect x="549.35" y="193.10" width="0.7" height="9.40" fill="#ffffff" opacity="0.75"/>
<rect x="556.85" y="193.10" width="0.7" height="9.40" fill="#ffffff" opacity="0.75"/>
<rect x="582.05" y="193.10" width="0.7" height="9.40" fill="#ffffff" opacity="0.75"/>
<rect x="594.25" y="193.10" width="0.7" height="9.40" fill="#ffffff" opacity="0.75"/>
<rect x="615.05" y="193.10" width="0.7" height="9.40" fill="#ffffff" opacity="0.75"/>
<rect x="639.65" y="193.10" width="0.7" height="9.40" fill="#ffffff" opacity="0.75"/>
<rect x="652.15" y="193.10" width="0.7" height="9.40" fill="#ffffff" opacity="0.75"/>
<rect x="454.6" y="192.80" width="218.0" height="0.6" fill="#ffffff" opacity="0.75"/>
<text x="468.6" y="199.00" class="tt" font-size="2.5" font-weight="bold" fill="rgba(30,30,40,0.6)" text-anchor="middle">T</text>
<text x="488.1" y="199.00" class="tt" font-size="2.5" font-weight="bold" fill="rgba(30,30,40,0.6)" text-anchor="middle">Proprietà per 1/1</text>
<text x="510.0" y="199.00" class="tt" font-size="2.5" font-weight="bold" fill="rgba(30,30,40,0.6)" text-anchor="middle">SOLUOMBU</text>
<text x="525.5" y="199.00" class="tt" font-size="2.5" font-weight="bold" fill="rgba(30,30,40,0.6)" text-anchor="middle">16</text>
<text x="540.5" y="199.00" class="tt" font-size="2.5" font-weight="bold" fill="rgba(30,30,40,0.6)" text-anchor="middle">439</text>
<text x="569.8" y="199.00" class="tt" font-size="2.5" font-weight="bold" fill="rgba(30,30,40,0.6)" text-anchor="middle">RELIT STRAD</text>
<text x="605.0" y="199.00" class="tt" font-size="2.5" font-weight="bold" fill="rgba(30,30,40,0.6)" text-anchor="middle">105</text>
<text x="617.4" y="197.20" class="tt" font-size="2.5" font-weight="bold" fill="rgba(30,30,40,0.6)">R.D. Euro:</text>
<text x="617.4" y="200.50" class="tt" font-size="2.5" font-weight="bold" fill="rgba(30,30,40,0.6)">R.A. Euro:</text>
<rect x="461.15" y="202.50" width="0.7" height="9.20" fill="#ffffff" opacity="0.75"/>
<rect x="475.45" y="202.50" width="0.7" height="9.20" fill="#ffffff" opacity="0.75"/>
<rect x="500.15" y="202.50" width="0.7" height="9.20" fill="#ffffff" opacity="0.75"/>
<rect x="519.15" y="202.50" width="0.7" height="9.20" fill="#ffffff" opacity="0.75"/>
<rect x="531.05" y="202.50" width="0.7" height="9.20" fill="#ffffff" opacity="0.75"/>
<rect x="549.35" y="202.50" width="0.7" height="9.20" fill="#ffffff" opacity="0.75"/>
<rect x="556.85" y="202.50" width="0.7" height="9.20" fill="#ffffff" opacity="0.75"/>
<rect x="582.05" y="202.50" width="0.7" height="9.20" fill="#ffffff" opacity="0.75"/>
<rect x="594.25" y="202.50" width="0.7" height="9.20" fill="#ffffff" opacity="0.75"/>
<rect x="615.05" y="202.50" width="0.7" height="9.20" fill="#ffffff" opacity="0.75"/>
<rect x="639.65" y="202.50" width="0.7" height="9.20" fill="#ffffff" opacity="0.75"/>
<rect x="652.15" y="202.50" width="0.7" height="9.20" fill="#ffffff" opacity="0.75"/>
<rect x="454.6" y="202.20" width="218.0" height="0.6" fill="#ffffff" opacity="0.75"/>
<text x="468.6" y="208.30" class="tt" font-size="2.5" font-weight="bold" fill="rgba(30,30,40,0.6)" text-anchor="middle">T</text>
<text x="488.1" y="208.30" class="tt" font-size="2.5" font-weight="bold" fill="rgba(30,30,40,0.6)" text-anchor="middle">Proprietà per 1/1</text>
<text x="510.0" y="208.30" class="tt" font-size="2.5" font-weight="bold" fill="rgba(30,30,40,0.6)" text-anchor="middle">SOLUOMBU</text>
<text x="525.5" y="208.30" class="tt" font-size="2.5" font-weight="bold" fill="rgba(30,30,40,0.6)" text-anchor="middle">16</text>
<text x="540.5" y="208.30" class="tt" font-size="2.5" font-weight="bold" fill="rgba(30,30,40,0.6)" text-anchor="middle">462</text>
<text x="569.8" y="208.30" class="tt" font-size="2.5" font-weight="bold" fill="rgba(30,30,40,0.6)" text-anchor="middle">RELIT STRAD</text>
<text x="605.0" y="208.30" class="tt" font-size="2.5" font-weight="bold" fill="rgba(30,30,40,0.6)" text-anchor="middle">40</text>
<text x="617.4" y="206.50" class="tt" font-size="2.5" font-weight="bold" fill="rgba(30,30,40,0.6)">R.D. Euro:</text>
<text x="617.4" y="209.80" class="tt" font-size="2.5" font-weight="bold" fill="rgba(30,30,40,0.6)">R.A. Euro:</text>
<rect x="461.15" y="211.70" width="0.7" height="9.30" fill="#ffffff" opacity="0.75"/>
<rect x="475.45" y="211.70" width="0.7" height="9.30" fill="#ffffff" opacity="0.75"/>
<rect x="500.15" y="211.70" width="0.7" height="9.30" fill="#ffffff" opacity="0.75"/>
<rect x="519.15" y="211.70" width="0.7" height="9.30" fill="#ffffff" opacity="0.75"/>
<rect x="531.05" y="211.70" width="0.7" height="9.30" fill="#ffffff" opacity="0.75"/>
<rect x="549.35" y="211.70" width="0.7" height="9.30" fill="#ffffff" opacity="0.75"/>
<rect x="556.85" y="211.70" width="0.7" height="9.30" fill="#ffffff" opacity="0.75"/>
<rect x="582.05" y="211.70" width="0.7" height="9.30" fill="#ffffff" opacity="0.75"/>
<rect x="594.25" y="211.70" width="0.7" height="9.30" fill="#ffffff" opacity="0.75"/>
<rect x="615.05" y="211.70" width="0.7" height="9.30" fill="#ffffff" opacity="0.75"/>
<rect x="639.65" y="211.70" width="0.7" height="9.30" fill="#ffffff" opacity="0.75"/>
<rect x="652.15" y="211.70" width="0.7" height="9.30" fill="#ffffff" opacity="0.75"/>
<rect x="454.6" y="211.40" width="218.0" height="0.6" fill="#ffffff" opacity="0.75"/>
<text x="468.6" y="217.55" class="tt" font-size="2.5" font-weight="bold" fill="rgba(30,30,40,0.6)" text-anchor="middle">T</text>
<text x="488.1" y="217.55" class="tt" font-size="2.5" font-weight="bold" fill="rgba(30,30,40,0.6)" text-anchor="middle">Proprietà per 1/1</text>
<text x="510.0" y="217.55" class="tt" font-size="2.5" font-weight="bold" fill="rgba(30,30,40,0.6)" text-anchor="middle">SOLUOMBU</text>
<text x="525.5" y="217.55" class="tt" font-size="2.5" font-weight="bold" fill="rgba(30,30,40,0.6)" text-anchor="middle">16</text>
<text x="540.5" y="217.55" class="tt" font-size="2.5" font-weight="bold" fill="rgba(30,30,40,0.6)" text-anchor="middle">464</text>
<text x="569.8" y="217.55" class="tt" font-size="2.5" font-weight="bold" fill="rgba(30,30,40,0.6)" text-anchor="middle">RELIT STRAD</text>
<text x="605.0" y="217.55" class="tt" font-size="2.5" font-weight="bold" fill="rgba(30,30,40,0.6)" text-anchor="middle">22</text>
<text x="617.4" y="215.75" class="tt" font-size="2.5" font-weight="bold" fill="rgba(30,30,40,0.6)">R.D. Euro:</text>
<text x="617.4" y="219.05" class="tt" font-size="2.5" font-weight="bold" fill="rgba(30,30,40,0.6)">R.A. Euro:</text>
<rect x="461.15" y="221.00" width="0.7" height="9.30" fill="#ffffff" opacity="1"/>
<rect x="475.45" y="221.00" width="0.7" height="9.30" fill="#ffffff" opacity="1"/>
<rect x="500.15" y="221.00" width="0.7" height="9.30" fill="#ffffff" opacity="1"/>
<rect x="519.15" y="221.00" width="0.7" height="9.30" fill="#ffffff" opacity="1"/>
<rect x="531.05" y="221.00" width="0.7" height="9.30" fill="#ffffff" opacity="1"/>
<rect x="549.35" y="221.00" width="0.7" height="9.30" fill="#ffffff" opacity="1"/>
<rect x="556.85" y="221.00" width="0.7" height="9.30" fill="#ffffff" opacity="1"/>
<rect x="582.05" y="221.00" width="0.7" height="9.30" fill="#ffffff" opacity="1"/>
<rect x="594.25" y="221.00" width="0.7" height="9.30" fill="#ffffff" opacity="1"/>
<rect x="615.05" y="221.00" width="0.7" height="9.30" fill="#ffffff" opacity="1"/>
<rect x="639.65" y="221.00" width="0.7" height="9.30" fill="#ffffff" opacity="1"/>
<rect x="652.15" y="221.00" width="0.7" height="9.30" fill="#ffffff" opacity="1"/>
<rect x="454.6" y="220.70" width="218.0" height="0.6" fill="#ffffff" opacity="1"/>
<text x="458.2" y="226.85" class="tt" font-size="2.6" font-weight="bold" fill="rgba(10,20,35,0.66)" text-anchor="middle">18</text>
<text x="468.6" y="226.85" class="tt" font-size="2.6" font-weight="bold" fill="rgba(10,20,35,0.66)" text-anchor="middle">T</text>
<text x="488.1" y="226.85" class="tt" font-size="2.6" font-weight="bold" fill="rgba(10,20,35,0.66)" text-anchor="middle">Proprietà per 1/1</text>
<text x="510.0" y="226.85" class="tt" font-size="2.6" font-weight="bold" fill="rgba(10,20,35,0.66)" text-anchor="middle">SOLUOMBU</text>
<text x="525.5" y="226.85" class="tt" font-size="2.6" font-weight="bold" fill="rgba(10,20,35,0.66)" text-anchor="middle">16</text>
<text x="540.5" y="226.85" class="tt" font-size="2.6" font-weight="bold" fill="rgba(10,20,35,0.66)" text-anchor="middle">154</text>
<text x="569.8" y="226.85" class="tt" font-size="2.6" font-weight="bold" fill="rgba(10,20,35,0.66)" text-anchor="middle">RELIT STRAD</text>
<text x="605.0" y="226.85" class="tt" font-size="2.6" font-weight="bold" fill="rgba(10,20,35,0.66)" text-anchor="middle">8</text>
<text x="617.4" y="225.05" class="tt" font-size="2.6" font-weight="bold" fill="rgba(10,20,35,0.66)">R.D. Euro:</text>
<text x="617.4" y="228.35" class="tt" font-size="2.6" font-weight="bold" fill="rgba(10,20,35,0.66)">R.A. Euro:</text>
<rect x="461.15" y="230.30" width="0.7" height="9.20" fill="#d8ecd8" opacity="0.28"/>
<rect x="475.45" y="230.30" width="0.7" height="9.20" fill="#d8ecd8" opacity="0.28"/>
<rect x="500.15" y="230.30" width="0.7" height="9.20" fill="#d8ecd8" opacity="0.28"/>
<rect x="519.15" y="230.30" width="0.7" height="9.20" fill="#d8ecd8" opacity="0.28"/>
<rect x="531.05" y="230.30" width="0.7" height="9.20" fill="#d8ecd8" opacity="0.28"/>
<rect x="549.35" y="230.30" width="0.7" height="9.20" fill="#d8ecd8" opacity="0.28"/>
<rect x="556.85" y="230.30" width="0.7" height="9.20" fill="#d8ecd8" opacity="0.28"/>
<rect x="582.05" y="230.30" width="0.7" height="9.20" fill="#d8ecd8" opacity="0.28"/>
<rect x="594.25" y="230.30" width="0.7" height="9.20" fill="#d8ecd8" opacity="0.28"/>
<rect x="615.05" y="230.30" width="0.7" height="9.20" fill="#d8ecd8" opacity="0.28"/>
<rect x="639.65" y="230.30" width="0.7" height="9.20" fill="#d8ecd8" opacity="0.28"/>
<rect x="652.15" y="230.30" width="0.7" height="9.20" fill="#d8ecd8" opacity="0.28"/>
<rect x="454.6" y="230.00" width="218.0" height="0.6" fill="#d8ecd8" opacity="0.28"/>
<text x="458.2" y="236.10" class="tt" font-size="2.6" font-weight="bold" fill="rgba(10,20,35,0.66)" text-anchor="middle">19</text>
<text x="468.6" y="236.10" class="tt" font-size="2.6" font-weight="bold" fill="rgba(10,20,35,0.66)" text-anchor="middle">T</text>
<text x="488.1" y="236.10" class="tt" font-size="2.6" font-weight="bold" fill="rgba(10,20,35,0.66)" text-anchor="middle">Proprietà per 1/1</text>
<text x="510.0" y="236.10" class="tt" font-size="2.6" font-weight="bold" fill="rgba(10,20,35,0.66)" text-anchor="middle">SOLUOMBU</text>
<text x="525.5" y="236.10" class="tt" font-size="2.6" font-weight="bold" fill="rgba(10,20,35,0.66)" text-anchor="middle">16</text>
<text x="540.5" y="236.10" class="tt" font-size="2.6" font-weight="bold" fill="rgba(10,20,35,0.66)" text-anchor="middle">441</text>
<text x="569.8" y="236.10" class="tt" font-size="2.6" font-weight="bold" fill="rgba(10,20,35,0.66)" text-anchor="middle">PRATO</text>
<text x="588.5" y="236.10" class="tt" font-size="2.6" font-weight="bold" fill="rgba(10,20,35,0.66)" text-anchor="middle">03</text>
<text x="605.0" y="236.10" class="tt" font-size="2.6" font-weight="bold" fill="rgba(10,20,35,0.66)" text-anchor="middle">7547</text>
<text x="617.4" y="234.30" class="tt" font-size="2.6" font-weight="bold" fill="rgba(10,20,35,0.66)">R.D. Euro: 14,03</text>
<text x="617.4" y="237.60" class="tt" font-size="2.6" font-weight="bold" fill="rgba(10,20,35,0.66)">R.A. Euro: 5,46</text>
<rect x="461.15" y="239.50" width="0.7" height="9.10" fill="#d8ecd8" opacity="0.28"/>
<rect x="475.45" y="239.50" width="0.7" height="9.10" fill="#d8ecd8" opacity="0.28"/>
<rect x="500.15" y="239.50" width="0.7" height="9.10" fill="#d8ecd8" opacity="0.28"/>
<rect x="519.15" y="239.50" width="0.7" height="9.10" fill="#d8ecd8" opacity="0.28"/>
<rect x="531.05" y="239.50" width="0.7" height="9.10" fill="#d8ecd8" opacity="0.28"/>
<rect x="549.35" y="239.50" width="0.7" height="9.10" fill="#d8ecd8" opacity="0.28"/>
<rect x="556.85" y="239.50" width="0.7" height="9.10" fill="#d8ecd8" opacity="0.28"/>
<rect x="582.05" y="239.50" width="0.7" height="9.10" fill="#d8ecd8" opacity="0.28"/>
<rect x="594.25" y="239.50" width="0.7" height="9.10" fill="#d8ecd8" opacity="0.28"/>
<rect x="615.05" y="239.50" width="0.7" height="9.10" fill="#d8ecd8" opacity="0.28"/>
<rect x="639.65" y="239.50" width="0.7" height="9.10" fill="#d8ecd8" opacity="0.28"/>
<rect x="652.15" y="239.50" width="0.7" height="9.10" fill="#d8ecd8" opacity="0.28"/>
<rect x="454.6" y="239.20" width="218.0" height="0.6" fill="#d8ecd8" opacity="0.28"/>
<text x="458.2" y="245.25" class="tt" font-size="2.6" font-weight="bold" fill="rgba(10,20,35,0.66)" text-anchor="middle">20</text>
<text x="468.6" y="245.25" class="tt" font-size="2.6" font-weight="bold" fill="rgba(10,20,35,0.66)" text-anchor="middle">T</text>
<text x="488.1" y="245.25" class="tt" font-size="2.6" font-weight="bold" fill="rgba(10,20,35,0.66)" text-anchor="middle">Proprietà per 1/1</text>
<text x="510.0" y="245.25" class="tt" font-size="2.6" font-weight="bold" fill="rgba(10,20,35,0.66)" text-anchor="middle">SOLUOMBU</text>
<text x="525.5" y="245.25" class="tt" font-size="2.6" font-weight="bold" fill="rgba(10,20,35,0.66)" text-anchor="middle">16</text>
<text x="540.5" y="245.25" class="tt" font-size="2.6" font-weight="bold" fill="rgba(10,20,35,0.66)" text-anchor="middle">457</text>
<text x="569.8" y="245.25" class="tt" font-size="2.6" font-weight="bold" fill="rgba(10,20,35,0.66)" text-anchor="middle">PRATO</text>
<text x="588.5" y="245.25" class="tt" font-size="2.6" font-weight="bold" fill="rgba(10,20,35,0.66)" text-anchor="middle">02</text>
<text x="605.0" y="245.25" class="tt" font-size="2.6" font-weight="bold" fill="rgba(10,20,35,0.66)" text-anchor="middle">750</text>
<text x="617.4" y="243.45" class="tt" font-size="2.6" font-weight="bold" fill="rgba(10,20,35,0.66)">R.D. Euro: 1,16</text>
<text x="617.4" y="246.75" class="tt" font-size="2.6" font-weight="bold" fill="rgba(10,20,35,0.66)">R.A. Euro: 0,58</text>
<rect x="461.15" y="248.60" width="0.7" height="9.10" fill="#d8ecd8" opacity="0.28"/>
<rect x="475.45" y="248.60" width="0.7" height="9.10" fill="#d8ecd8" opacity="0.28"/>
<rect x="500.15" y="248.60" width="0.7" height="9.10" fill="#d8ecd8" opacity="0.28"/>
<rect x="519.15" y="248.60" width="0.7" height="9.10" fill="#d8ecd8" opacity="0.28"/>
<rect x="531.05" y="248.60" width="0.7" height="9.10" fill="#d8ecd8" opacity="0.28"/>
<rect x="549.35" y="248.60" width="0.7" height="9.10" fill="#d8ecd8" opacity="0.28"/>
<rect x="556.85" y="248.60" width="0.7" height="9.10" fill="#d8ecd8" opacity="0.28"/>
<rect x="582.05" y="248.60" width="0.7" height="9.10" fill="#d8ecd8" opacity="0.28"/>
<rect x="594.25" y="248.60" width="0.7" height="9.10" fill="#d8ecd8" opacity="0.28"/>
<rect x="615.05" y="248.60" width="0.7" height="9.10" fill="#d8ecd8" opacity="0.28"/>
<rect x="639.65" y="248.60" width="0.7" height="9.10" fill="#d8ecd8" opacity="0.28"/>
<rect x="652.15" y="248.60" width="0.7" height="9.10" fill="#d8ecd8" opacity="0.28"/>
<rect x="454.6" y="248.30" width="218.0" height="0.6" fill="#d8ecd8" opacity="0.28"/>
<text x="458.2" y="254.35" class="tt" font-size="2.6" font-weight="bold" fill="rgba(10,20,35,0.66)" text-anchor="middle">21</text>
<text x="468.6" y="254.35" class="tt" font-size="2.6" font-weight="bold" fill="rgba(10,20,35,0.66)" text-anchor="middle">T</text>
<text x="488.1" y="254.35" class="tt" font-size="2.6" font-weight="bold" fill="rgba(10,20,35,0.66)" text-anchor="middle">Proprietà per 1/1</text>
<text x="510.0" y="254.35" class="tt" font-size="2.6" font-weight="bold" fill="rgba(10,20,35,0.66)" text-anchor="middle">SOLUOMBU</text>
<text x="525.5" y="254.35" class="tt" font-size="2.6" font-weight="bold" fill="rgba(10,20,35,0.66)" text-anchor="middle">16</text>
<text x="540.5" y="254.35" class="tt" font-size="2.6" font-weight="bold" fill="rgba(10,20,35,0.66)" text-anchor="middle">111</text>
<text x="569.8" y="254.35" class="tt" font-size="2.6" font-weight="bold" fill="rgba(10,20,35,0.66)" text-anchor="middle">PRATO</text>
<text x="617.4" y="252.55" class="tt" font-size="2.6" font-weight="bold" fill="rgba(10,20,35,0.66)">R.D. Euro: 0,54</text>
<text x="617.4" y="255.85" class="tt" font-size="2.6" font-weight="bold" fill="rgba(10,20,35,0.66)">R.A. Euro: 0,27</text>
<rect x="461.15" y="257.70" width="0.7" height="9.30" fill="#d8ecd8" opacity="0.28"/>
<rect x="475.45" y="257.70" width="0.7" height="9.30" fill="#d8ecd8" opacity="0.28"/>
<rect x="500.15" y="257.70" width="0.7" height="9.30" fill="#d8ecd8" opacity="0.28"/>
<rect x="519.15" y="257.70" width="0.7" height="9.30" fill="#d8ecd8" opacity="0.28"/>
<rect x="531.05" y="257.70" width="0.7" height="9.30" fill="#d8ecd8" opacity="0.28"/>
<rect x="549.35" y="257.70" width="0.7" height="9.30" fill="#d8ecd8" opacity="0.28"/>
<rect x="556.85" y="257.70" width="0.7" height="9.30" fill="#d8ecd8" opacity="0.28"/>
<rect x="582.05" y="257.70" width="0.7" height="9.30" fill="#d8ecd8" opacity="0.28"/>
<rect x="594.25" y="257.70" width="0.7" height="9.30" fill="#d8ecd8" opacity="0.28"/>
<rect x="615.05" y="257.70" width="0.7" height="9.30" fill="#d8ecd8" opacity="0.28"/>
<rect x="639.65" y="257.70" width="0.7" height="9.30" fill="#d8ecd8" opacity="0.28"/>
<rect x="652.15" y="257.70" width="0.7" height="9.30" fill="#d8ecd8" opacity="0.28"/>
<rect x="454.6" y="257.40" width="218.0" height="0.6" fill="#d8ecd8" opacity="0.28"/>
<text x="458.2" y="263.55" class="tt" font-size="2.6" font-weight="bold" fill="rgba(10,20,35,0.66)" text-anchor="middle">22</text>
<text x="468.6" y="263.55" class="tt" font-size="2.6" font-weight="bold" fill="rgba(10,20,35,0.66)" text-anchor="middle">T</text>
<text x="488.1" y="263.55" class="tt" font-size="2.6" font-weight="bold" fill="rgba(10,20,35,0.66)" text-anchor="middle">Proprietà per 1/1</text>
<text x="510.0" y="263.55" class="tt" font-size="2.6" font-weight="bold" fill="rgba(10,20,35,0.66)" text-anchor="middle">SOLUOMBU</text>
<text x="525.5" y="263.55" class="tt" font-size="2.6" font-weight="bold" fill="rgba(10,20,35,0.66)" text-anchor="middle">16</text>
<text x="540.5" y="263.55" class="tt" font-size="2.6" font-weight="bold" fill="rgba(10,20,35,0.66)" text-anchor="middle">117</text>
<text x="569.8" y="263.55" class="tt" font-size="2.6" font-weight="bold" fill="rgba(10,20,35,0.66)" text-anchor="middle">PRATO</text>
<text x="588.5" y="263.55" class="tt" font-size="2.6" font-weight="bold" fill="rgba(10,20,35,0.66)" text-anchor="middle">01</text>
<text x="605.0" y="263.55" class="tt" font-size="2.6" font-weight="bold" fill="rgba(10,20,35,0.66)" text-anchor="middle">7547</text>
<text x="617.4" y="261.75" class="tt" font-size="2.6" font-weight="bold" fill="rgba(10,20,35,0.66)">R.D. Euro: 14,03</text>
<text x="617.4" y="265.05" class="tt" font-size="2.6" font-weight="bold" fill="rgba(10,20,35,0.66)">R.A. Euro: 5,46</text>
<rect x="461.15" y="267.00" width="0.7" height="9.30" fill="#d8ecd8" opacity="0.28"/>
<rect x="475.45" y="267.00" width="0.7" height="9.30" fill="#d8ecd8" opacity="0.28"/>
<rect x="500.15" y="267.00" width="0.7" height="9.30" fill="#d8ecd8" opacity="0.28"/>
<rect x="519.15" y="267.00" width="0.7" height="9.30" fill="#d8ecd8" opacity="0.28"/>
<rect x="531.05" y="267.00" width="0.7" height="9.30" fill="#d8ecd8" opacity="0.28"/>
<rect x="549.35" y="267.00" width="0.7" height="9.30" fill="#d8ecd8" opacity="0.28"/>
<rect x="556.85" y="267.00" width="0.7" height="9.30" fill="#d8ecd8" opacity="0.28"/>
<rect x="582.05" y="267.00" width="0.7" height="9.30" fill="#d8ecd8" opacity="0.28"/>
<rect x="594.25" y="267.00" width="0.7" height="9.30" fill="#d8ecd8" opacity="0.28"/>
<rect x="615.05" y="267.00" width="0.7" height="9.30" fill="#d8ecd8" opacity="0.28"/>
<rect x="639.65" y="267.00" width="0.7" height="9.30" fill="#d8ecd8" opacity="0.28"/>
<rect x="652.15" y="267.00" width="0.7" height="9.30" fill="#d8ecd8" opacity="0.28"/>
<rect x="454.6" y="266.70" width="218.0" height="0.6" fill="#d8ecd8" opacity="0.28"/>
<text x="458.2" y="272.85" class="tt" font-size="2.6" font-weight="bold" fill="rgba(10,20,35,0.66)" text-anchor="middle">23</text>
<text x="468.6" y="272.85" class="tt" font-size="2.6" font-weight="bold" fill="rgba(10,20,35,0.66)" text-anchor="middle">T</text>
<text x="488.1" y="272.85" class="tt" font-size="2.6" font-weight="bold" fill="rgba(10,20,35,0.66)" text-anchor="middle">Proprietà per 1/1</text>
<text x="510.0" y="272.85" class="tt" font-size="2.6" font-weight="bold" fill="rgba(10,20,35,0.66)" text-anchor="middle">SOLUOMBU</text>
<text x="525.5" y="272.85" class="tt" font-size="2.6" font-weight="bold" fill="rgba(10,20,35,0.66)" text-anchor="middle">16</text>
<text x="540.5" y="272.85" class="tt" font-size="2.6" font-weight="bold" fill="rgba(10,20,35,0.66)" text-anchor="middle">112</text>
<text x="569.8" y="272.85" class="tt" font-size="2.6" font-weight="bold" fill="rgba(10,20,35,0.66)" text-anchor="middle">BOSCO MISTO</text>
<text x="588.5" y="272.85" class="tt" font-size="2.6" font-weight="bold" fill="rgba(10,20,35,0.66)" text-anchor="middle">01</text>
<text x="605.0" y="272.85" class="tt" font-size="2.6" font-weight="bold" fill="rgba(10,20,35,0.66)" text-anchor="middle">67</text>
<text x="617.4" y="271.05" class="tt" font-size="2.6" font-weight="bold" fill="rgba(10,20,35,0.66)">R.D. Euro: 0,05</text>
<text x="617.4" y="274.35" class="tt" font-size="2.6" font-weight="bold" fill="rgba(10,20,35,0.66)">R.A. Euro: 0,01</text>
<rect x="461.15" y="276.30" width="0.7" height="9.20" fill="#d8ecd8" opacity="0.28"/>
<rect x="475.45" y="276.30" width="0.7" height="9.20" fill="#d8ecd8" opacity="0.28"/>
<rect x="500.15" y="276.30" width="0.7" height="9.20" fill="#d8ecd8" opacity="0.28"/>
<rect x="519.15" y="276.30" width="0.7" height="9.20" fill="#d8ecd8" opacity="0.28"/>
<rect x="531.05" y="276.30" width="0.7" height="9.20" fill="#d8ecd8" opacity="0.28"/>
<rect x="549.35" y="276.30" width="0.7" height="9.20" fill="#d8ecd8" opacity="0.28"/>
<rect x="556.85" y="276.30" width="0.7" height="9.20" fill="#d8ecd8" opacity="0.28"/>
<rect x="582.05" y="276.30" width="0.7" height="9.20" fill="#d8ecd8" opacity="0.28"/>
<rect x="594.25" y="276.30" width="0.7" height="9.20" fill="#d8ecd8" opacity="0.28"/>
<rect x="615.05" y="276.30" width="0.7" height="9.20" fill="#d8ecd8" opacity="0.28"/>
<rect x="639.65" y="276.30" width="0.7" height="9.20" fill="#d8ecd8" opacity="0.28"/>
<rect x="652.15" y="276.30" width="0.7" height="9.20" fill="#d8ecd8" opacity="0.28"/>
<rect x="454.6" y="276.00" width="218.0" height="0.6" fill="#d8ecd8" opacity="0.28"/>
<text x="458.2" y="282.10" class="tt" font-size="2.6" font-weight="bold" fill="rgba(10,20,35,0.66)" text-anchor="middle">24</text>
<text x="468.6" y="282.10" class="tt" font-size="2.6" font-weight="bold" fill="rgba(10,20,35,0.66)" text-anchor="middle">T</text>
<text x="488.1" y="282.10" class="tt" font-size="2.6" font-weight="bold" fill="rgba(10,20,35,0.66)" text-anchor="middle">Proprietà per 1/1</text>
<text x="510.0" y="282.10" class="tt" font-size="2.6" font-weight="bold" fill="rgba(10,20,35,0.66)" text-anchor="middle">SOLUOMBU</text>
<text x="525.5" y="282.10" class="tt" font-size="2.6" font-weight="bold" fill="rgba(10,20,35,0.66)" text-anchor="middle">16</text>
<text x="540.5" y="282.10" class="tt" font-size="2.6" font-weight="bold" fill="rgba(10,20,35,0.66)" text-anchor="middle">460</text>
<text x="569.8" y="282.10" class="tt" font-size="2.6" font-weight="bold" fill="rgba(10,20,35,0.66)" text-anchor="middle">INCOLT STE</text>
<text x="588.5" y="282.10" class="tt" font-size="2.6" font-weight="bold" fill="rgba(10,20,35,0.66)" text-anchor="middle">U</text>
<text x="605.0" y="282.10" class="tt" font-size="2.6" font-weight="bold" fill="rgba(10,20,35,0.66)" text-anchor="middle">7547</text>
<text x="617.4" y="280.30" class="tt" font-size="2.6" font-weight="bold" fill="rgba(10,20,35,0.66)">R.D. Euro: 0,05</text>
<text x="617.4" y="283.60" class="tt" font-size="2.6" font-weight="bold" fill="rgba(10,20,35,0.66)">R.A. Euro: 0,01</text>
<rect x="461.15" y="285.50" width="0.7" height="9.10" fill="#d8ecd8" opacity="0.28"/>
<rect x="475.45" y="285.50" width="0.7" height="9.10" fill="#d8ecd8" opacity="0.28"/>
<rect x="500.15" y="285.50" width="0.7" height="9.10" fill="#d8ecd8" opacity="0.28"/>
<rect x="519.15" y="285.50" width="0.7" height="9.10" fill="#d8ecd8" opacity="0.28"/>
<rect x="531.05" y="285.50" width="0.7" height="9.10" fill="#d8ecd8" opacity="0.28"/>
<rect x="549.35" y="285.50" width="0.7" height="9.10" fill="#d8ecd8" opacity="0.28"/>
<rect x="556.85" y="285.50" width="0.7" height="9.10" fill="#d8ecd8" opacity="0.28"/>
<rect x="582.05" y="285.50" width="0.7" height="9.10" fill="#d8ecd8" opacity="0.28"/>
<rect x="594.25" y="285.50" width="0.7" height="9.10" fill="#d8ecd8" opacity="0.28"/>
<rect x="615.05" y="285.50" width="0.7" height="9.10" fill="#d8ecd8" opacity="0.28"/>
<rect x="639.65" y="285.50" width="0.7" height="9.10" fill="#d8ecd8" opacity="0.28"/>
<rect x="652.15" y="285.50" width="0.7" height="9.10" fill="#d8ecd8" opacity="0.28"/>
<rect x="454.6" y="285.20" width="218.0" height="0.6" fill="#d8ecd8" opacity="0.28"/>
<text x="458.2" y="291.25" class="tt" font-size="2.6" font-weight="bold" fill="rgba(10,20,35,0.66)" text-anchor="middle">25</text>
<text x="468.6" y="291.25" class="tt" font-size="2.6" font-weight="bold" fill="rgba(10,20,35,0.66)" text-anchor="middle">T</text>
<text x="488.1" y="291.25" class="tt" font-size="2.6" font-weight="bold" fill="rgba(10,20,35,0.66)" text-anchor="middle">Proprietà per 1/1</text>
<text x="510.0" y="291.25" class="tt" font-size="2.6" font-weight="bold" fill="rgba(10,20,35,0.66)" text-anchor="middle">SOLUOMBU</text>
<text x="525.5" y="291.25" class="tt" font-size="2.6" font-weight="bold" fill="rgba(10,20,35,0.66)" text-anchor="middle">16</text>
<text x="540.5" y="291.25" class="tt" font-size="2.6" font-weight="bold" fill="rgba(10,20,35,0.66)" text-anchor="middle">447</text>
<text x="569.8" y="291.25" class="tt" font-size="2.6" font-weight="bold" fill="rgba(10,20,35,0.66)" text-anchor="middle">SEMINATIVO</text>
<text x="605.0" y="291.25" class="tt" font-size="2.6" font-weight="bold" fill="rgba(10,20,35,0.66)" text-anchor="middle">8</text>
<text x="617.4" y="289.45" class="tt" font-size="2.6" font-weight="bold" fill="rgba(10,20,35,0.66)">R.D. Euro: 1,16</text>
<text x="617.4" y="292.75" class="tt" font-size="2.6" font-weight="bold" fill="rgba(10,20,35,0.66)">R.A. Euro: 0,58</text>
<rect x="461.15" y="294.60" width="0.7" height="9.10" fill="#d8ecd8" opacity="0.28"/>
<rect x="475.45" y="294.60" width="0.7" height="9.10" fill="#d8ecd8" opacity="0.28"/>
<rect x="500.15" y="294.60" width="0.7" height="9.10" fill="#d8ecd8" opacity="0.28"/>
<rect x="519.15" y="294.60" width="0.7" height="9.10" fill="#d8ecd8" opacity="0.28"/>
<rect x="531.05" y="294.60" width="0.7" height="9.10" fill="#d8ecd8" opacity="0.28"/>
<rect x="549.35" y="294.60" width="0.7" height="9.10" fill="#d8ecd8" opacity="0.28"/>
<rect x="556.85" y="294.60" width="0.7" height="9.10" fill="#d8ecd8" opacity="0.28"/>
<rect x="582.05" y="294.60" width="0.7" height="9.10" fill="#d8ecd8" opacity="0.28"/>
<rect x="594.25" y="294.60" width="0.7" height="9.10" fill="#d8ecd8" opacity="0.28"/>
<rect x="615.05" y="294.60" width="0.7" height="9.10" fill="#d8ecd8" opacity="0.28"/>
<rect x="639.65" y="294.60" width="0.7" height="9.10" fill="#d8ecd8" opacity="0.28"/>
<rect x="652.15" y="294.60" width="0.7" height="9.10" fill="#d8ecd8" opacity="0.28"/>
<rect x="454.6" y="294.30" width="218.0" height="0.6" fill="#d8ecd8" opacity="0.28"/>
<text x="458.2" y="300.35" class="tt" font-size="2.6" font-weight="bold" fill="rgba(10,20,35,0.66)" text-anchor="middle">26</text>
<text x="468.6" y="300.35" class="tt" font-size="2.6" font-weight="bold" fill="rgba(10,20,35,0.66)" text-anchor="middle">T</text>
<text x="488.1" y="300.35" class="tt" font-size="2.6" font-weight="bold" fill="rgba(10,20,35,0.66)" text-anchor="middle">Proprietà per 1/1</text>
<text x="510.0" y="300.35" class="tt" font-size="2.6" font-weight="bold" fill="rgba(10,20,35,0.66)" text-anchor="middle">SOLUOMBU</text>
<text x="525.5" y="300.35" class="tt" font-size="2.6" font-weight="bold" fill="rgba(10,20,35,0.66)" text-anchor="middle">16</text>
<text x="540.5" y="300.35" class="tt" font-size="2.6" font-weight="bold" fill="rgba(10,20,35,0.66)" text-anchor="middle">113</text>
<text x="569.8" y="300.35" class="tt" font-size="2.6" font-weight="bold" fill="rgba(10,20,35,0.66)" text-anchor="middle">BOSCO MISTO</text>
<text x="605.0" y="300.35" class="tt" font-size="2.6" font-weight="bold" fill="rgba(10,20,35,0.66)" text-anchor="middle">750</text>
<text x="617.4" y="298.55" class="tt" font-size="2.6" font-weight="bold" fill="rgba(10,20,35,0.66)">R.D. Euro: 0,54</text>
<text x="617.4" y="301.85" class="tt" font-size="2.6" font-weight="bold" fill="rgba(10,20,35,0.66)">R.A. Euro: 0,27</text>
<rect x="461.15" y="303.70" width="0.7" height="8.50" fill="#d8ecd8" opacity="0.28"/>
<rect x="475.45" y="303.70" width="0.7" height="8.50" fill="#d8ecd8" opacity="0.28"/>
<rect x="500.15" y="303.70" width="0.7" height="8.50" fill="#d8ecd8" opacity="0.28"/>
<rect x="519.15" y="303.70" width="0.7" height="8.50" fill="#d8ecd8" opacity="0.28"/>
<rect x="531.05" y="303.70" width="0.7" height="8.50" fill="#d8ecd8" opacity="0.28"/>
<rect x="549.35" y="303.70" width="0.7" height="8.50" fill="#d8ecd8" opacity="0.28"/>
<rect x="556.85" y="303.70" width="0.7" height="8.50" fill="#d8ecd8" opacity="0.28"/>
<rect x="582.05" y="303.70" width="0.7" height="8.50" fill="#d8ecd8" opacity="0.28"/>
<rect x="594.25" y="303.70" width="0.7" height="8.50" fill="#d8ecd8" opacity="0.28"/>
<rect x="615.05" y="303.70" width="0.7" height="8.50" fill="#d8ecd8" opacity="0.28"/>
<rect x="639.65" y="303.70" width="0.7" height="8.50" fill="#d8ecd8" opacity="0.28"/>
<rect x="652.15" y="303.70" width="0.7" height="8.50" fill="#d8ecd8" opacity="0.28"/>
<rect x="454.6" y="303.40" width="218.0" height="0.6" fill="#d8ecd8" opacity="0.28"/>
<text x="458.2" y="309.15" class="tt" font-size="2.6" font-weight="bold" fill="rgba(10,20,35,0.66)" text-anchor="middle">27</text>
<text x="468.6" y="309.15" class="tt" font-size="2.6" font-weight="bold" fill="rgba(10,20,35,0.66)" text-anchor="middle">T</text>
<text x="488.1" y="309.15" class="tt" font-size="2.6" font-weight="bold" fill="rgba(10,20,35,0.66)" text-anchor="middle">Proprietà per 1/1</text>
<text x="510.0" y="309.15" class="tt" font-size="2.6" font-weight="bold" fill="rgba(10,20,35,0.66)" text-anchor="middle">SOLUOMBU</text>
<text x="525.5" y="309.15" class="tt" font-size="2.6" font-weight="bold" fill="rgba(10,20,35,0.66)" text-anchor="middle">16</text>
<text x="540.5" y="309.15" class="tt" font-size="2.6" font-weight="bold" fill="rgba(10,20,35,0.66)" text-anchor="middle">332</text>
<text x="569.8" y="309.15" class="tt" font-size="2.6" font-weight="bold" fill="rgba(10,20,35,0.66)" text-anchor="middle">SEMINATIVO</text>
<text x="588.5" y="309.15" class="tt" font-size="2.6" font-weight="bold" fill="rgba(10,20,35,0.66)" text-anchor="middle">02</text>
<text x="617.4" y="307.35" class="tt" font-size="2.6" font-weight="bold" fill="rgba(10,20,35,0.66)">R.D. Euro: 0,05</text>
<text x="617.4" y="310.65" class="tt" font-size="2.6" font-weight="bold" fill="rgba(10,20,35,0.66)">R.A. Euro: 0,01</text>
<rect x="461.15" y="313.90" width="0.7" height="8.50" fill="#d8ecd8" opacity="0.28"/>
<rect x="475.45" y="313.90" width="0.7" height="8.50" fill="#d8ecd8" opacity="0.28"/>
<rect x="500.15" y="313.90" width="0.7" height="8.50" fill="#d8ecd8" opacity="0.28"/>
<rect x="519.15" y="313.90" width="0.7" height="8.50" fill="#d8ecd8" opacity="0.28"/>
<rect x="531.05" y="313.90" width="0.7" height="8.50" fill="#d8ecd8" opacity="0.28"/>
<rect x="549.35" y="313.90" width="0.7" height="8.50" fill="#d8ecd8" opacity="0.28"/>
<rect x="556.85" y="313.90" width="0.7" height="8.50" fill="#d8ecd8" opacity="0.28"/>
<rect x="582.05" y="313.90" width="0.7" height="8.50" fill="#d8ecd8" opacity="0.28"/>
<rect x="594.25" y="313.90" width="0.7" height="8.50" fill="#d8ecd8" opacity="0.28"/>
<rect x="615.05" y="313.90" width="0.7" height="8.50" fill="#d8ecd8" opacity="0.28"/>
<rect x="639.65" y="313.90" width="0.7" height="8.50" fill="#d8ecd8" opacity="0.28"/>
<rect x="652.15" y="313.90" width="0.7" height="8.50" fill="#d8ecd8" opacity="0.28"/>
<rect x="454.6" y="313.60" width="218.0" height="0.6" fill="#d8ecd8" opacity="0.28"/>
<text x="458.2" y="319.35" class="tt" font-size="2.6" font-weight="bold" fill="rgba(10,20,35,0.66)" text-anchor="middle">28</text>
<text x="468.6" y="319.35" class="tt" font-size="2.6" font-weight="bold" fill="rgba(10,20,35,0.66)" text-anchor="middle">T</text>
<text x="488.1" y="319.35" class="tt" font-size="2.6" font-weight="bold" fill="rgba(10,20,35,0.66)" text-anchor="middle">Proprietà per 1/1</text>
<text x="510.0" y="319.35" class="tt" font-size="2.6" font-weight="bold" fill="rgba(10,20,35,0.66)" text-anchor="middle">SOLUOMBU</text>
<text x="525.5" y="319.35" class="tt" font-size="2.6" font-weight="bold" fill="rgba(10,20,35,0.66)" text-anchor="middle">16</text>
<text x="540.5" y="319.35" class="tt" font-size="2.6" font-weight="bold" fill="rgba(10,20,35,0.66)" text-anchor="middle">99</text>
<text x="569.8" y="319.35" class="tt" font-size="2.6" font-weight="bold" fill="rgba(10,20,35,0.66)" text-anchor="middle">BOSCO MISTO</text>
<text x="605.0" y="319.35" class="tt" font-size="2.6" font-weight="bold" fill="rgba(10,20,35,0.66)" text-anchor="middle">750</text>
<text x="617.4" y="317.55" class="tt" font-size="2.6" font-weight="bold" fill="rgba(10,20,35,0.66)">R.D. Euro: 14,03</text>
<text x="617.4" y="320.85" class="tt" font-size="2.6" font-weight="bold" fill="rgba(10,20,35,0.66)">R.A. Euro: 5,46</text>
<rect x="461.15" y="322.40" width="0.7" height="9.20" fill="#d8ecd8" opacity="0.28"/>
<rect x="475.45" y="322.40" width="0.7" height="9.20" fill="#d8ecd8" opacity="0.28"/>
<rect x="500.15" y="322.40" width="0.7" height="9.20" fill="#d8ecd8" opacity="0.28"/>
<rect x="519.15" y="322.40" width="0.7" height="9.20" fill="#d8ecd8" opacity="0.28"/>
<rect x="531.05" y="322.40" width="0.7" height="9.20" fill="#d8ecd8" opacity="0.28"/>
<rect x="549.35" y="322.40" width="0.7" height="9.20" fill="#d8ecd8" opacity="0.28"/>
<rect x="556.85" y="322.40" width="0.7" height="9.20" fill="#d8ecd8" opacity="0.28"/>
<rect x="582.05" y="322.40" width="0.7" height="9.20" fill="#d8ecd8" opacity="0.28"/>
<rect x="594.25" y="322.40" width="0.7" height="9.20" fill="#d8ecd8" opacity="0.28"/>
<rect x="615.05" y="322.40" width="0.7" height="9.20" fill="#d8ecd8" opacity="0.28"/>
<rect x="639.65" y="322.40" width="0.7" height="9.20" fill="#d8ecd8" opacity="0.28"/>
<rect x="652.15" y="322.40" width="0.7" height="9.20" fill="#d8ecd8" opacity="0.28"/>
<rect x="454.6" y="322.10" width="218.0" height="0.6" fill="#d8ecd8" opacity="0.28"/>
<text x="458.2" y="328.20" class="tt" font-size="2.6" font-weight="bold" fill="rgba(10,20,35,0.66)" text-anchor="middle">29</text>
<text x="468.6" y="328.20" class="tt" font-size="2.6" font-weight="bold" fill="rgba(10,20,35,0.66)" text-anchor="middle">T</text>
<text x="488.1" y="328.20" class="tt" font-size="2.6" font-weight="bold" fill="rgba(10,20,35,0.66)" text-anchor="middle">Proprietà per 1/1</text>
<text x="510.0" y="328.20" class="tt" font-size="2.6" font-weight="bold" fill="rgba(10,20,35,0.66)" text-anchor="middle">SOLUOMBU</text>
<text x="525.5" y="328.20" class="tt" font-size="2.6" font-weight="bold" fill="rgba(10,20,35,0.66)" text-anchor="middle">16</text>
<text x="540.5" y="328.20" class="tt" font-size="2.6" font-weight="bold" fill="rgba(10,20,35,0.66)" text-anchor="middle">448</text>
<text x="569.8" y="328.20" class="tt" font-size="2.6" font-weight="bold" fill="rgba(10,20,35,0.66)" text-anchor="middle">SEMINATIVO</text>
<text x="588.5" y="328.20" class="tt" font-size="2.6" font-weight="bold" fill="rgba(10,20,35,0.66)" text-anchor="middle">01</text>
<text x="605.0" y="328.20" class="tt" font-size="2.6" font-weight="bold" fill="rgba(10,20,35,0.66)" text-anchor="middle">67</text>
<text x="617.4" y="326.40" class="tt" font-size="2.6" font-weight="bold" fill="rgba(10,20,35,0.66)">R.D. Euro: 1,16</text>
<text x="617.4" y="329.70" class="tt" font-size="2.6" font-weight="bold" fill="rgba(10,20,35,0.66)">R.A. Euro: 0,58</text>
<rect x="461.15" y="331.60" width="0.7" height="9.40" fill="#d8ecd8" opacity="0.28"/>
<rect x="475.45" y="331.60" width="0.7" height="9.40" fill="#d8ecd8" opacity="0.28"/>
<rect x="500.15" y="331.60" width="0.7" height="9.40" fill="#d8ecd8" opacity="0.28"/>
<rect x="519.15" y="331.60" width="0.7" height="9.40" fill="#d8ecd8" opacity="0.28"/>
<rect x="531.05" y="331.60" width="0.7" height="9.40" fill="#d8ecd8" opacity="0.28"/>
<rect x="549.35" y="331.60" width="0.7" height="9.40" fill="#d8ecd8" opacity="0.28"/>
<rect x="556.85" y="331.60" width="0.7" height="9.40" fill="#d8ecd8" opacity="0.28"/>
<rect x="582.05" y="331.60" width="0.7" height="9.40" fill="#d8ecd8" opacity="0.28"/>
<rect x="594.25" y="331.60" width="0.7" height="9.40" fill="#d8ecd8" opacity="0.28"/>
<rect x="615.05" y="331.60" width="0.7" height="9.40" fill="#d8ecd8" opacity="0.28"/>
<rect x="639.65" y="331.60" width="0.7" height="9.40" fill="#d8ecd8" opacity="0.28"/>
<rect x="652.15" y="331.60" width="0.7" height="9.40" fill="#d8ecd8" opacity="0.28"/>
<rect x="454.6" y="331.30" width="218.0" height="0.6" fill="#d8ecd8" opacity="0.28"/>
<text x="458.2" y="337.50" class="tt" font-size="2.6" font-weight="bold" fill="rgba(10,20,35,0.66)" text-anchor="middle">30</text>
<text x="468.6" y="337.50" class="tt" font-size="2.6" font-weight="bold" fill="rgba(10,20,35,0.66)" text-anchor="middle">T</text>
<text x="488.1" y="337.50" class="tt" font-size="2.6" font-weight="bold" fill="rgba(10,20,35,0.66)" text-anchor="middle">Proprietà per 1/1</text>
<text x="510.0" y="337.50" class="tt" font-size="2.6" font-weight="bold" fill="rgba(10,20,35,0.66)" text-anchor="middle">SOLUOMBU</text>
<text x="525.5" y="337.50" class="tt" font-size="2.6" font-weight="bold" fill="rgba(10,20,35,0.66)" text-anchor="middle">16</text>
<text x="540.5" y="337.50" class="tt" font-size="2.6" font-weight="bold" fill="rgba(10,20,35,0.66)" text-anchor="middle">442</text>
<text x="569.8" y="337.50" class="tt" font-size="2.6" font-weight="bold" fill="rgba(10,20,35,0.66)" text-anchor="middle">SEMINATIVO</text>
<text x="588.5" y="337.50" class="tt" font-size="2.6" font-weight="bold" fill="rgba(10,20,35,0.66)" text-anchor="middle">01</text>
<text x="617.4" y="335.70" class="tt" font-size="2.6" font-weight="bold" fill="rgba(10,20,35,0.66)">R.D. Euro: 0,54</text>
<text x="617.4" y="339.00" class="tt" font-size="2.6" font-weight="bold" fill="rgba(10,20,35,0.66)">R.A. Euro: 0,27</text>
<rect x="461.15" y="341.00" width="0.7" height="9.50" fill="#d8ecd8" opacity="0.28"/>
<rect x="475.45" y="341.00" width="0.7" height="9.50" fill="#d8ecd8" opacity="0.28"/>
<rect x="500.15" y="341.00" width="0.7" height="9.50" fill="#d8ecd8" opacity="0.28"/>
<rect x="519.15" y="341.00" width="0.7" height="9.50" fill="#d8ecd8" opacity="0.28"/>
<rect x="531.05" y="341.00" width="0.7" height="9.50" fill="#d8ecd8" opacity="0.28"/>
<rect x="549.35" y="341.00" width="0.7" height="9.50" fill="#d8ecd8" opacity="0.28"/>
<rect x="556.85" y="341.00" width="0.7" height="9.50" fill="#d8ecd8" opacity="0.28"/>
<rect x="582.05" y="341.00" width="0.7" height="9.50" fill="#d8ecd8" opacity="0.28"/>
<rect x="594.25" y="341.00" width="0.7" height="9.50" fill="#d8ecd8" opacity="0.28"/>
<rect x="615.05" y="341.00" width="0.7" height="9.50" fill="#d8ecd8" opacity="0.28"/>
<rect x="639.65" y="341.00" width="0.7" height="9.50" fill="#d8ecd8" opacity="0.28"/>
<rect x="652.15" y="341.00" width="0.7" height="9.50" fill="#d8ecd8" opacity="0.28"/>
<rect x="454.6" y="340.70" width="218.0" height="0.6" fill="#d8ecd8" opacity="0.28"/>
<text x="458.2" y="346.95" class="tt" font-size="2.6" font-weight="bold" fill="rgba(10,20,35,0.66)" text-anchor="middle">31</text>
<text x="468.6" y="346.95" class="tt" font-size="2.6" font-weight="bold" fill="rgba(10,20,35,0.66)" text-anchor="middle">T</text>
<text x="488.1" y="346.95" class="tt" font-size="2.6" font-weight="bold" fill="rgba(10,20,35,0.66)" text-anchor="middle">Proprietà per 1/1</text>
<text x="510.0" y="346.95" class="tt" font-size="2.6" font-weight="bold" fill="rgba(10,20,35,0.66)" text-anchor="middle">SOLUOMBU</text>
<text x="525.5" y="346.95" class="tt" font-size="2.6" font-weight="bold" fill="rgba(10,20,35,0.66)" text-anchor="middle">16</text>
<text x="540.5" y="346.95" class="tt" font-size="2.6" font-weight="bold" fill="rgba(10,20,35,0.66)" text-anchor="middle">449</text>
<text x="569.8" y="346.95" class="tt" font-size="2.6" font-weight="bold" fill="rgba(10,20,35,0.66)" text-anchor="middle">BOSCO MISTO</text>
<text x="617.4" y="345.15" class="tt" font-size="2.6" font-weight="bold" fill="rgba(10,20,35,0.66)">R.D. Euro: 0,05</text>
<text x="617.4" y="348.45" class="tt" font-size="2.6" font-weight="bold" fill="rgba(10,20,35,0.66)">R.A. Euro: 0,01</text>
<rect x="461.15" y="350.50" width="0.7" height="9.10" fill="#d8ecd8" opacity="0.28"/>
<rect x="475.45" y="350.50" width="0.7" height="9.10" fill="#d8ecd8" opacity="0.28"/>
<rect x="500.15" y="350.50" width="0.7" height="9.10" fill="#d8ecd8" opacity="0.28"/>
<rect x="519.15" y="350.50" width="0.7" height="9.10" fill="#d8ecd8" opacity="0.28"/>
<rect x="531.05" y="350.50" width="0.7" height="9.10" fill="#d8ecd8" opacity="0.28"/>
<rect x="549.35" y="350.50" width="0.7" height="9.10" fill="#d8ecd8" opacity="0.28"/>
<rect x="556.85" y="350.50" width="0.7" height="9.10" fill="#d8ecd8" opacity="0.28"/>
<rect x="582.05" y="350.50" width="0.7" height="9.10" fill="#d8ecd8" opacity="0.28"/>
<rect x="594.25" y="350.50" width="0.7" height="9.10" fill="#d8ecd8" opacity="0.28"/>
<rect x="615.05" y="350.50" width="0.7" height="9.10" fill="#d8ecd8" opacity="0.28"/>
<rect x="639.65" y="350.50" width="0.7" height="9.10" fill="#d8ecd8" opacity="0.28"/>
<rect x="652.15" y="350.50" width="0.7" height="9.10" fill="#d8ecd8" opacity="0.28"/>
<rect x="454.6" y="350.20" width="218.0" height="0.6" fill="#d8ecd8" opacity="0.28"/>
<text x="458.2" y="356.25" class="tt" font-size="2.6" font-weight="bold" fill="rgba(10,20,35,0.66)" text-anchor="middle">32</text>
<text x="468.6" y="356.25" class="tt" font-size="2.6" font-weight="bold" fill="rgba(10,20,35,0.66)" text-anchor="middle">T</text>
<text x="488.1" y="356.25" class="tt" font-size="2.6" font-weight="bold" fill="rgba(10,20,35,0.66)" text-anchor="middle">Proprietà per 1/1</text>
<text x="510.0" y="356.25" class="tt" font-size="2.6" font-weight="bold" fill="rgba(10,20,35,0.66)" text-anchor="middle">SOLUOMBU</text>
<text x="525.5" y="356.25" class="tt" font-size="2.6" font-weight="bold" fill="rgba(10,20,35,0.66)" text-anchor="middle">16</text>
<text x="540.5" y="356.25" class="tt" font-size="2.6" font-weight="bold" fill="rgba(10,20,35,0.66)" text-anchor="middle">99</text>
<text x="569.8" y="356.25" class="tt" font-size="2.6" font-weight="bold" fill="rgba(10,20,35,0.66)" text-anchor="middle">SEMINATIVO</text>
<text x="617.4" y="354.45" class="tt" font-size="2.6" font-weight="bold" fill="rgba(10,20,35,0.66)">R.D. Euro: 14,03</text>
<text x="617.4" y="357.75" class="tt" font-size="2.6" font-weight="bold" fill="rgba(10,20,35,0.66)">R.A. Euro: 5,46</text>
<rect x="461.15" y="359.60" width="0.7" height="9.10" fill="#d8ecd8" opacity="0.28"/>
<rect x="475.45" y="359.60" width="0.7" height="9.10" fill="#d8ecd8" opacity="0.28"/>
<rect x="500.15" y="359.60" width="0.7" height="9.10" fill="#d8ecd8" opacity="0.28"/>
<rect x="519.15" y="359.60" width="0.7" height="9.10" fill="#d8ecd8" opacity="0.28"/>
<rect x="531.05" y="359.60" width="0.7" height="9.10" fill="#d8ecd8" opacity="0.28"/>
<rect x="549.35" y="359.60" width="0.7" height="9.10" fill="#d8ecd8" opacity="0.28"/>
<rect x="556.85" y="359.60" width="0.7" height="9.10" fill="#d8ecd8" opacity="0.28"/>
<rect x="582.05" y="359.60" width="0.7" height="9.10" fill="#d8ecd8" opacity="0.28"/>
<rect x="594.25" y="359.60" width="0.7" height="9.10" fill="#d8ecd8" opacity="0.28"/>
<rect x="615.05" y="359.60" width="0.7" height="9.10" fill="#d8ecd8" opacity="0.28"/>
<rect x="639.65" y="359.60" width="0.7" height="9.10" fill="#d8ecd8" opacity="0.28"/>
<rect x="652.15" y="359.60" width="0.7" height="9.10" fill="#d8ecd8" opacity="0.28"/>
<rect x="454.6" y="359.30" width="218.0" height="0.6" fill="#d8ecd8" opacity="0.28"/>
<text x="458.2" y="365.35" class="tt" font-size="2.6" font-weight="bold" fill="rgba(10,20,35,0.66)" text-anchor="middle">33</text>
<text x="468.6" y="365.35" class="tt" font-size="2.6" font-weight="bold" fill="rgba(10,20,35,0.66)" text-anchor="middle">T</text>
<text x="488.1" y="365.35" class="tt" font-size="2.6" font-weight="bold" fill="rgba(10,20,35,0.66)" text-anchor="middle">Proprietà per 1/1</text>
<text x="510.0" y="365.35" class="tt" font-size="2.6" font-weight="bold" fill="rgba(10,20,35,0.66)" text-anchor="middle">SOLUOMBU</text>
<text x="525.5" y="365.35" class="tt" font-size="2.6" font-weight="bold" fill="rgba(10,20,35,0.66)" text-anchor="middle">16</text>
<text x="540.5" y="365.35" class="tt" font-size="2.6" font-weight="bold" fill="rgba(10,20,35,0.66)" text-anchor="middle">47</text>
<text x="569.8" y="365.35" class="tt" font-size="2.6" font-weight="bold" fill="rgba(10,20,35,0.66)" text-anchor="middle">BOSCO MISTO</text>
<text x="605.0" y="365.35" class="tt" font-size="2.6" font-weight="bold" fill="rgba(10,20,35,0.66)" text-anchor="middle">750</text>
<text x="617.4" y="363.55" class="tt" font-size="2.6" font-weight="bold" fill="rgba(10,20,35,0.66)">R.D. Euro: 1,16</text>
<text x="617.4" y="366.85" class="tt" font-size="2.6" font-weight="bold" fill="rgba(10,20,35,0.66)">R.A. Euro: 0,58</text>
<rect x="461.15" y="368.70" width="0.7" height="8.90" fill="#d8ecd8" opacity="0.28"/>
<rect x="475.45" y="368.70" width="0.7" height="8.90" fill="#d8ecd8" opacity="0.28"/>
<rect x="500.15" y="368.70" width="0.7" height="8.90" fill="#d8ecd8" opacity="0.28"/>
<rect x="519.15" y="368.70" width="0.7" height="8.90" fill="#d8ecd8" opacity="0.28"/>
<rect x="531.05" y="368.70" width="0.7" height="8.90" fill="#d8ecd8" opacity="0.28"/>
<rect x="549.35" y="368.70" width="0.7" height="8.90" fill="#d8ecd8" opacity="0.28"/>
<rect x="556.85" y="368.70" width="0.7" height="8.90" fill="#d8ecd8" opacity="0.28"/>
<rect x="582.05" y="368.70" width="0.7" height="8.90" fill="#d8ecd8" opacity="0.28"/>
<rect x="594.25" y="368.70" width="0.7" height="8.90" fill="#d8ecd8" opacity="0.28"/>
<rect x="615.05" y="368.70" width="0.7" height="8.90" fill="#d8ecd8" opacity="0.28"/>
<rect x="639.65" y="368.70" width="0.7" height="8.90" fill="#d8ecd8" opacity="0.28"/>
<rect x="652.15" y="368.70" width="0.7" height="8.90" fill="#d8ecd8" opacity="0.28"/>
<rect x="454.6" y="368.40" width="218.0" height="0.6" fill="#d8ecd8" opacity="0.28"/>
<text x="458.2" y="374.35" class="tt" font-size="2.6" font-weight="bold" fill="rgba(10,20,35,0.66)" text-anchor="middle">34</text>
<text x="468.6" y="374.35" class="tt" font-size="2.6" font-weight="bold" fill="rgba(10,20,35,0.66)" text-anchor="middle">T</text>
<text x="488.1" y="374.35" class="tt" font-size="2.6" font-weight="bold" fill="rgba(10,20,35,0.66)" text-anchor="middle">Proprietà per 1/1</text>
<text x="510.0" y="374.35" class="tt" font-size="2.6" font-weight="bold" fill="rgba(10,20,35,0.66)" text-anchor="middle">SOLUOMBU</text>
<text x="525.5" y="374.35" class="tt" font-size="2.6" font-weight="bold" fill="rgba(10,20,35,0.66)" text-anchor="middle">16</text>
<text x="540.5" y="374.35" class="tt" font-size="2.6" font-weight="bold" fill="rgba(10,20,35,0.66)" text-anchor="middle">447</text>
<text x="569.8" y="374.35" class="tt" font-size="2.6" font-weight="bold" fill="rgba(10,20,35,0.66)" text-anchor="middle">SEMINATIVO</text>
<text x="605.0" y="374.35" class="tt" font-size="2.6" font-weight="bold" fill="rgba(10,20,35,0.66)" text-anchor="middle">8,8</text>
<text x="617.4" y="372.55" class="tt" font-size="2.6" font-weight="bold" fill="rgba(10,20,35,0.66)">R.D. Euro: 0,54</text>
<text x="617.4" y="375.85" class="tt" font-size="2.6" font-weight="bold" fill="rgba(10,20,35,0.66)">R.A. Euro: 0,27</text>
<rect x="461.15" y="377.60" width="0.7" height="9.20" fill="#d8ecd8" opacity="0.28"/>
<rect x="475.45" y="377.60" width="0.7" height="9.20" fill="#d8ecd8" opacity="0.28"/>
<rect x="500.15" y="377.60" width="0.7" height="9.20" fill="#d8ecd8" opacity="0.28"/>
<rect x="519.15" y="377.60" width="0.7" height="9.20" fill="#d8ecd8" opacity="0.28"/>
<rect x="531.05" y="377.60" width="0.7" height="9.20" fill="#d8ecd8" opacity="0.28"/>
<rect x="549.35" y="377.60" width="0.7" height="9.20" fill="#d8ecd8" opacity="0.28"/>
<rect x="556.85" y="377.60" width="0.7" height="9.20" fill="#d8ecd8" opacity="0.28"/>
<rect x="582.05" y="377.60" width="0.7" height="9.20" fill="#d8ecd8" opacity="0.28"/>
<rect x="594.25" y="377.60" width="0.7" height="9.20" fill="#d8ecd8" opacity="0.28"/>
<rect x="615.05" y="377.60" width="0.7" height="9.20" fill="#d8ecd8" opacity="0.28"/>
<rect x="639.65" y="377.60" width="0.7" height="9.20" fill="#d8ecd8" opacity="0.28"/>
<rect x="652.15" y="377.60" width="0.7" height="9.20" fill="#d8ecd8" opacity="0.28"/>
<rect x="454.6" y="377.30" width="218.0" height="0.6" fill="#d8ecd8" opacity="0.28"/>
<text x="458.2" y="383.40" class="tt" font-size="2.6" font-weight="bold" fill="rgba(10,20,35,0.66)" text-anchor="middle">35</text>
<text x="468.6" y="383.40" class="tt" font-size="2.6" font-weight="bold" fill="rgba(10,20,35,0.66)" text-anchor="middle">T</text>
<text x="488.1" y="383.40" class="tt" font-size="2.6" font-weight="bold" fill="rgba(10,20,35,0.66)" text-anchor="middle">Proprietà per 1/1</text>
<text x="510.0" y="383.40" class="tt" font-size="2.6" font-weight="bold" fill="rgba(10,20,35,0.66)" text-anchor="middle">SOLUOMBU</text>
<text x="525.5" y="383.40" class="tt" font-size="2.6" font-weight="bold" fill="rgba(10,20,35,0.66)" text-anchor="middle">16</text>
<text x="540.5" y="383.40" class="tt" font-size="2.6" font-weight="bold" fill="rgba(10,20,35,0.66)" text-anchor="middle">445</text>
<text x="569.8" y="383.40" class="tt" font-size="2.6" font-weight="bold" fill="rgba(10,20,35,0.66)" text-anchor="middle">BOSCO MISTO</text>
<text x="617.4" y="381.60" class="tt" font-size="2.6" font-weight="bold" fill="rgba(10,20,35,0.66)">R.D. Euro: 0,05</text>
<text x="617.4" y="384.90" class="tt" font-size="2.6" font-weight="bold" fill="rgba(10,20,35,0.66)">R.A. Euro: 0,01</text>
<rect x="454.6" y="312.2" width="218.0" height="1.7" fill="#ffffff"/>
<rect x="454" y="0" width="219.2" height="0.9" fill="#000"/>
<rect x="454" y="10.7" width="219.2" height="1.1" fill="#000"/>
<rect x="454.1" y="0" width="0.9" height="388" fill="#333"/>
<rect x="672.2" y="0" width="0.9" height="388" fill="#333"/>
<rect x="454" y="386.8" width="219.2" height="1.2" fill="#687078"/>
</g>
<rect x="578.2" y="392.5" width="53.6" height="1.5" fill="#111"/>
<text x="476" y="410.1" class="bi" font-size="6.1" fill="#000" textLength="62.6" lengthAdjust="spacingAndGlyphs">TOTALE SUPERFICIE</text>
<rect x="570.3" y="401" width="69.2" height="12" fill="#c9c2fa"/>
<text x="570.8" y="411.2" class="bi" font-size="11.2" fill="#000" textLength="67.9" lengthAdjust="spacingAndGlyphs">Mq. 148.831,00</text>
<rect x="713.2" y="126.1" width="35.9" height="9.7" fill="#fe7cf6"/>
<text x="753" y="133.9" class="bi" font-size="7.5" fill="#000" textLength="36.8" lengthAdjust="spacingAndGlyphs">LOTTO 1</text>
<text x="800.3" y="132.7" class="bi" font-size="5.7" fill="#111" textLength="79.6" lengthAdjust="spacingAndGlyphs">Tot. Superficie MQ. 41.175,00</text>
<rect x="713.2" y="150.2" width="35.9" height="9.7" fill="#7fdd94"/>
<text x="753" y="158.0" class="bi" font-size="7.5" fill="#000" textLength="36.8" lengthAdjust="spacingAndGlyphs">LOTTO 2</text>
<text x="800.3" y="156.8" class="bi" font-size="5.7" fill="#111" textLength="80.1" lengthAdjust="spacingAndGlyphs">Tot. Superficie MQ. 33.748,00</text>
<rect x="713.2" y="174.4" width="35.9" height="9.7" fill="#7ffbf6"/>
<text x="753" y="182.2" class="bi" font-size="7.5" fill="#000" textLength="36.8" lengthAdjust="spacingAndGlyphs">LOTTO 3</text>
<text x="800.3" y="181.0" class="bi" font-size="5.7" fill="#111" textLength="80.1" lengthAdjust="spacingAndGlyphs">Tot. Superficie MQ. 19.827,00</text>
<rect x="713.2" y="198.3" width="35.9" height="9.7" fill="#7c9ab0"/>
<text x="753" y="206.1" class="bi" font-size="7.5" fill="#000" textLength="36.8" lengthAdjust="spacingAndGlyphs">LOTTO 4</text>
<text x="800.3" y="204.9" class="bi" font-size="5.7" fill="#111" textLength="80.1" lengthAdjust="spacingAndGlyphs">Tot. Superficie MQ. 54.327,00</text>
<rect x="713.2" y="222.4" width="35.9" height="9.7" fill="#d5e9f5"/>
<text x="753" y="230.2" class="bi" font-size="7.5" fill="#000" textLength="35.2" lengthAdjust="spacingAndGlyphs">STRADA</text>
<text x="800.3" y="229.0" class="bi" font-size="5.7" fill="#111" textLength="72.0" lengthAdjust="spacingAndGlyphs">Tot. Superficie MQ. 554,00</text>
</svg></body></html>
